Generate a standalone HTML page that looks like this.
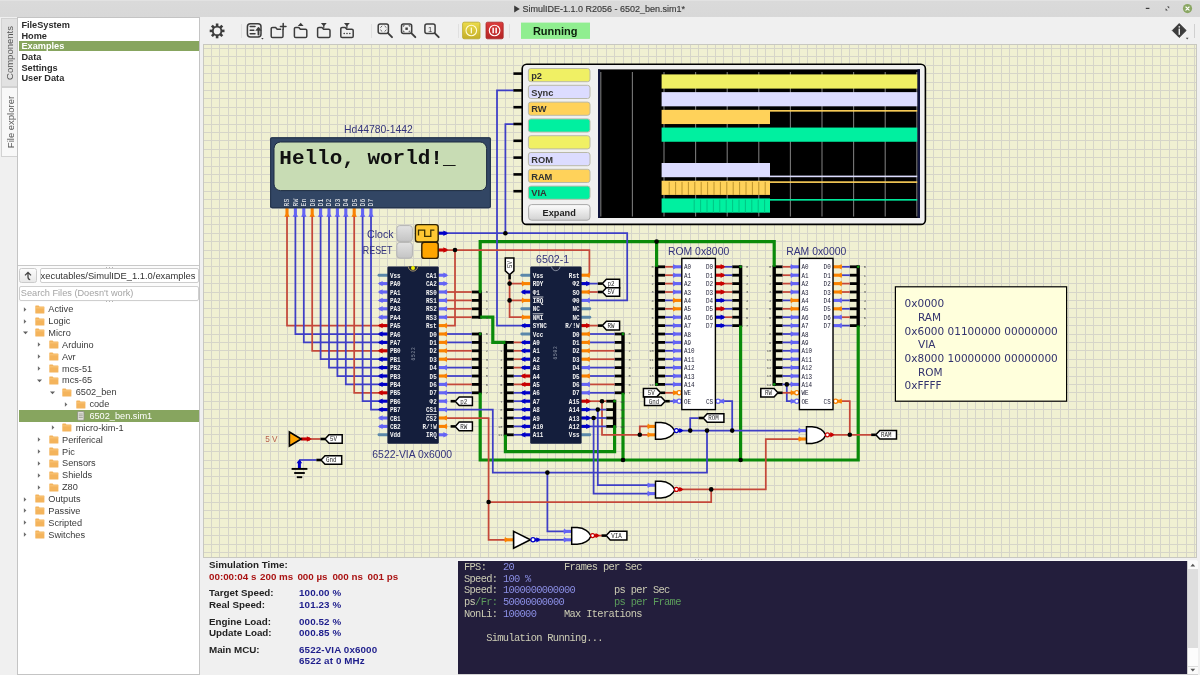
<!DOCTYPE html>
<html lang="en"><head><meta charset="utf-8"><title>SimulIDE-1.1.0 R2056 - 6502_ben.sim1*</title>
<style>
html,body{margin:0;padding:0}
html{background:#f0f0f0}
body{width:1200px;height:675px;overflow:hidden;background:#f0f0f0;position:relative;will-change:transform;font-family:"Liberation Sans",sans-serif;font-size:9.4px;color:#333}
.ab{position:absolute;display:block}
#title{position:absolute;left:0;top:0;width:1200px;height:17px;background:linear-gradient(#e6e6e6 0,#dadada 1.5px,#d8d8d8 100%)}
#title .t{position:absolute;left:522.5px;top:3.2px;height:12px;line-height:12px;font-size:9px;color:#3a3a3a;white-space:pre;-webkit-text-stroke:0.15px #3a3a3a}
#tabs{position:absolute;left:0;top:17px;width:18px;height:658px;background:#f0f0f0}
.vtab{position:absolute;left:1px;width:16.5px;box-sizing:border-box;border:1px solid #d2d2d2}
.vtab span{position:absolute;left:calc(50% + 1px);top:50%;white-space:nowrap;transform:translate(-50%,-50%) rotate(-90deg);font-size:9.5px;line-height:12px;color:#555}
#lpf{position:absolute;left:17px;top:17px;width:183px;height:658px;background:#fbfbfb;box-sizing:border-box;border:1px solid #c4c4c4}
#lp1{position:absolute;left:18px;top:18px;width:181px;height:248px;background:#fff;box-sizing:border-box;border:0 solid #cdcdcd;border-bottom:1px solid #c8c8c8;overflow:hidden}
.lr{position:absolute;left:3.4px;height:12px;line-height:12px;font-weight:bold;font-size:9.2px;white-space:pre}
.sel2{position:absolute;left:1.4px;width:179.6px;height:10.2px;background:#87a55f}
#up{position:absolute;left:19px;top:268px;width:17.5px;height:14.5px;box-sizing:border-box;border:1px solid #cbcbcb;border-radius:2.5px;background:linear-gradient(#fcfcfc,#e8e8e8)}
#path{position:absolute;left:40px;top:268px;width:159px;height:14.5px;box-sizing:border-box;border:1px solid #cdcdcd;border-radius:2px;background:#fff;overflow:hidden}
#path span{position:absolute;left:-0.4px;top:0.6px;line-height:12px;font-size:9.35px;color:#333;white-space:pre}
#search{position:absolute;left:19px;top:285.5px;width:180px;height:15px;box-sizing:border-box;border:1px solid #cfcfcf;border-radius:2px;background:#fff;overflow:hidden}
#search span{position:absolute;left:0.8px;top:0.9px;line-height:12px;font-size:9.2px;color:#a4a4a4;white-space:pre}
#tree{position:absolute;left:18px;top:301.5px;width:181px;height:372.5px;background:#fff}
#treein{position:absolute;left:0;top:0;width:200px;height:675px;pointer-events:none}
.tr{position:absolute;height:12px;line-height:12px;font-size:9.2px;white-space:pre}
.sel{position:absolute;left:19px;width:180px;height:11.4px;background:#87a55f}
#tb{position:absolute;left:200px;top:17px;width:1000px;height:27px;background:#f0f0f0}
.sep{position:absolute;top:6.5px;width:1px;height:14.5px;background:#e0e0e0}
#cv{position:absolute;left:203px;top:44px;width:994px;height:513.5px;overflow:hidden;background:#f0f0d2;box-sizing:border-box;border:1px solid #c8c8c0}
#cv svg{position:absolute;left:-204px;top:-45px}
#info{position:absolute;left:203px;top:558px;width:255px;height:117px;background:#f0f0f0}
.ir{position:absolute;height:12px;line-height:12px;font-weight:bold;font-size:9.8px;color:#222;white-space:pre}
.ir.rd{color:#aa1414}
.ir.bl{color:#1e1e8c;font-size:9.8px;letter-spacing:0.12px}
#con{position:absolute;left:458.3px;top:560.6px;width:728.7px;height:113px;background:#231e3c;overflow:hidden}
.cr{position:absolute;left:5.7px;height:12px;line-height:12px;font-family:"Liberation Mono",monospace;font-size:10.4px;letter-spacing:-0.68px;white-space:pre}
.cl{color:#ccccb4}.cv{color:#8a8ee4}.cg{color:#5c9c5c}
#sb{position:absolute;left:1187px;top:560.6px;width:10.5px;height:113px;background:#dedede;box-sizing:border-box;border-left:1px solid #cfcfcf}
.hd{position:absolute;width:1px;height:1px;background:#b4b4b4}
</style></head>
<body>
<div id="title">
<svg class="ab" style="left:513px;top:4px" width="8" height="10"><path d="M1.2,1.4 L6.8,5 L1.2,8.6 Z" fill="#3a3a3a"/></svg>
<div class="t">SimulIDE-1.1.0 R2056 - 6502_ben.sim1*</div>
<svg class="ab" style="left:1140px;top:0" width="60" height="17">
<rect x="5.8" y="7.8" width="3.6" height="1.2" fill="#3c3c3c"/>
<path d="M25.6,10.4 L25.6,8.2 L27.8,10.4 Z M29.2,6.4 L29.2,8.6 L27,6.4 Z" fill="#3c3c3c"/>
<circle cx="47.5" cy="8.6" r="4.6" fill="#8aa763"/>
<path d="M45.9,7 L49.1,10.2 M49.1,7 L45.9,10.2" stroke="#fff" stroke-width="1.1" stroke-linecap="round"/>
</svg>
</div>
<div id="tabs">
<div class="vtab" style="top:1.3px;height:69px;background:#e2e2e2"><span>Components</span></div>
<div class="vtab" style="top:70.3px;height:70px;background:#f8f8f8;border-right-color:#f8f8f8;width:17.5px"><span>File explorer</span></div>
</div>
<div id="lpf"></div>
<div id="lp1">
<div class="lr" style="top:1.00px;color:#2c2c2c">FileSystem</div>
<div class="lr" style="top:11.66px;color:#2c2c2c">Home</div>
<div class="sel2" style="top:23.22px"></div>
<div class="lr" style="top:22.32px;color:#fff">Examples</div>
<div class="lr" style="top:32.98px;color:#2c2c2c">Data</div>
<div class="lr" style="top:43.64px;color:#2c2c2c">Settings</div>
<div class="lr" style="top:54.30px;color:#2c2c2c">User Data</div>
</div>
<div id="up"><svg class="ab" style="left:3.2px;top:1.6px" width="10" height="10"><path d="M2,4.4 L5,1.4 L8,4.4 M5,1.6 L5,6 Q5,8.4 7.2,8.6" fill="none" stroke="#444" stroke-width="1.3"/></svg></div>
<div id="path"><span>xecutables/SimulIDE_1.1.0/examples</span></div>
<div id="search"><span>Search Files (Doesn't work)</span></div>
<div id="tree"></div>
<div id="treein">
<svg class="ab" style="left:22.30px;top:305.80px" width="6" height="7"><path d="M1.9,1.2 L4.4,3.5 L1.9,5.8 Z" fill="#707070"/></svg>
<svg class="ab" style="left:34.90px;top:304.70px" width="10" height="9"><path d="M0.3,0.9 Q0.3,0.4 0.9,0.4 L3.6,0.4 L4.5,1.5 L8.9,1.5 Q9.4,1.5 9.4,2 L9.4,7.9 Q9.4,8.4 8.9,8.4 L0.9,8.4 Q0.3,8.4 0.3,7.9 Z" fill="#f4b45c"/><path d="M0.3,2.6 L9.4,2.6 L9.4,3.2 L0.3,3.2 Z" fill="#fcd28c"/></svg>
<div class="tr" style="left:48.30px;top:303.30px;color:#3a3a3a">Active</div>
<svg class="ab" style="left:22.30px;top:317.66px" width="6" height="7"><path d="M1.9,1.2 L4.4,3.5 L1.9,5.8 Z" fill="#707070"/></svg>
<svg class="ab" style="left:34.90px;top:316.56px" width="10" height="9"><path d="M0.3,0.9 Q0.3,0.4 0.9,0.4 L3.6,0.4 L4.5,1.5 L8.9,1.5 Q9.4,1.5 9.4,2 L9.4,7.9 Q9.4,8.4 8.9,8.4 L0.9,8.4 Q0.3,8.4 0.3,7.9 Z" fill="#f4b45c"/><path d="M0.3,2.6 L9.4,2.6 L9.4,3.2 L0.3,3.2 Z" fill="#fcd28c"/></svg>
<div class="tr" style="left:48.30px;top:315.16px;color:#3a3a3a">Logic</div>
<svg class="ab" style="left:21.80px;top:330.42px" width="7" height="6"><path d="M1,1.4 L6,1.4 L3.5,4.2 Z" fill="#606060"/></svg>
<svg class="ab" style="left:34.90px;top:328.42px" width="10" height="9"><path d="M0.3,0.9 Q0.3,0.4 0.9,0.4 L3.6,0.4 L4.5,1.5 L8.9,1.5 Q9.4,1.5 9.4,2 L9.4,7.9 Q9.4,8.4 8.9,8.4 L0.9,8.4 Q0.3,8.4 0.3,7.9 Z" fill="#f4b45c"/><path d="M0.3,2.6 L9.4,2.6 L9.4,3.2 L0.3,3.2 Z" fill="#fcd28c"/></svg>
<div class="tr" style="left:48.30px;top:327.02px;color:#3a3a3a">Micro</div>
<svg class="ab" style="left:36.00px;top:341.38px" width="6" height="7"><path d="M1.9,1.2 L4.4,3.5 L1.9,5.8 Z" fill="#707070"/></svg>
<svg class="ab" style="left:48.60px;top:340.28px" width="10" height="9"><path d="M0.3,0.9 Q0.3,0.4 0.9,0.4 L3.6,0.4 L4.5,1.5 L8.9,1.5 Q9.4,1.5 9.4,2 L9.4,7.9 Q9.4,8.4 8.9,8.4 L0.9,8.4 Q0.3,8.4 0.3,7.9 Z" fill="#f4b45c"/><path d="M0.3,2.6 L9.4,2.6 L9.4,3.2 L0.3,3.2 Z" fill="#fcd28c"/></svg>
<div class="tr" style="left:62.00px;top:338.88px;color:#3a3a3a">Arduino</div>
<svg class="ab" style="left:36.00px;top:353.24px" width="6" height="7"><path d="M1.9,1.2 L4.4,3.5 L1.9,5.8 Z" fill="#707070"/></svg>
<svg class="ab" style="left:48.60px;top:352.14px" width="10" height="9"><path d="M0.3,0.9 Q0.3,0.4 0.9,0.4 L3.6,0.4 L4.5,1.5 L8.9,1.5 Q9.4,1.5 9.4,2 L9.4,7.9 Q9.4,8.4 8.9,8.4 L0.9,8.4 Q0.3,8.4 0.3,7.9 Z" fill="#f4b45c"/><path d="M0.3,2.6 L9.4,2.6 L9.4,3.2 L0.3,3.2 Z" fill="#fcd28c"/></svg>
<div class="tr" style="left:62.00px;top:350.74px;color:#3a3a3a">Avr</div>
<svg class="ab" style="left:36.00px;top:365.10px" width="6" height="7"><path d="M1.9,1.2 L4.4,3.5 L1.9,5.8 Z" fill="#707070"/></svg>
<svg class="ab" style="left:48.60px;top:364.00px" width="10" height="9"><path d="M0.3,0.9 Q0.3,0.4 0.9,0.4 L3.6,0.4 L4.5,1.5 L8.9,1.5 Q9.4,1.5 9.4,2 L9.4,7.9 Q9.4,8.4 8.9,8.4 L0.9,8.4 Q0.3,8.4 0.3,7.9 Z" fill="#f4b45c"/><path d="M0.3,2.6 L9.4,2.6 L9.4,3.2 L0.3,3.2 Z" fill="#fcd28c"/></svg>
<div class="tr" style="left:62.00px;top:362.60px;color:#3a3a3a">mcs-51</div>
<svg class="ab" style="left:35.50px;top:377.86px" width="7" height="6"><path d="M1,1.4 L6,1.4 L3.5,4.2 Z" fill="#606060"/></svg>
<svg class="ab" style="left:48.60px;top:375.86px" width="10" height="9"><path d="M0.3,0.9 Q0.3,0.4 0.9,0.4 L3.6,0.4 L4.5,1.5 L8.9,1.5 Q9.4,1.5 9.4,2 L9.4,7.9 Q9.4,8.4 8.9,8.4 L0.9,8.4 Q0.3,8.4 0.3,7.9 Z" fill="#f4b45c"/><path d="M0.3,2.6 L9.4,2.6 L9.4,3.2 L0.3,3.2 Z" fill="#fcd28c"/></svg>
<div class="tr" style="left:62.00px;top:374.46px;color:#3a3a3a">mcs-65</div>
<svg class="ab" style="left:49.20px;top:389.72px" width="7" height="6"><path d="M1,1.4 L6,1.4 L3.5,4.2 Z" fill="#606060"/></svg>
<svg class="ab" style="left:62.30px;top:387.72px" width="10" height="9"><path d="M0.3,0.9 Q0.3,0.4 0.9,0.4 L3.6,0.4 L4.5,1.5 L8.9,1.5 Q9.4,1.5 9.4,2 L9.4,7.9 Q9.4,8.4 8.9,8.4 L0.9,8.4 Q0.3,8.4 0.3,7.9 Z" fill="#f4b45c"/><path d="M0.3,2.6 L9.4,2.6 L9.4,3.2 L0.3,3.2 Z" fill="#fcd28c"/></svg>
<div class="tr" style="left:75.70px;top:386.32px;color:#3a3a3a">6502_ben</div>
<svg class="ab" style="left:63.40px;top:400.68px" width="6" height="7"><path d="M1.9,1.2 L4.4,3.5 L1.9,5.8 Z" fill="#707070"/></svg>
<svg class="ab" style="left:76.00px;top:399.58px" width="10" height="9"><path d="M0.3,0.9 Q0.3,0.4 0.9,0.4 L3.6,0.4 L4.5,1.5 L8.9,1.5 Q9.4,1.5 9.4,2 L9.4,7.9 Q9.4,8.4 8.9,8.4 L0.9,8.4 Q0.3,8.4 0.3,7.9 Z" fill="#f4b45c"/><path d="M0.3,2.6 L9.4,2.6 L9.4,3.2 L0.3,3.2 Z" fill="#fcd28c"/></svg>
<div class="tr" style="left:89.40px;top:398.18px;color:#3a3a3a">code</div>
<div class="sel" style="top:410.34px"></div>
<svg class="ab" style="left:77.40px;top:411.24px" width="8" height="10"><rect x="0.6" y="0.6" width="6.4" height="8.6" rx="0.8" fill="#e6e6e0" stroke="#8c9082" stroke-width="0.9"/><path d="M1.8,3 H5.8 M1.8,4.8 H5.8 M1.8,6.6 H5.8" stroke="#8c9082" stroke-width="0.8"/></svg>
<div class="tr" style="left:89.40px;top:410.04px;color:#fff">6502_ben.sim1</div>
<svg class="ab" style="left:49.70px;top:424.40px" width="6" height="7"><path d="M1.9,1.2 L4.4,3.5 L1.9,5.8 Z" fill="#707070"/></svg>
<svg class="ab" style="left:62.30px;top:423.30px" width="10" height="9"><path d="M0.3,0.9 Q0.3,0.4 0.9,0.4 L3.6,0.4 L4.5,1.5 L8.9,1.5 Q9.4,1.5 9.4,2 L9.4,7.9 Q9.4,8.4 8.9,8.4 L0.9,8.4 Q0.3,8.4 0.3,7.9 Z" fill="#f4b45c"/><path d="M0.3,2.6 L9.4,2.6 L9.4,3.2 L0.3,3.2 Z" fill="#fcd28c"/></svg>
<div class="tr" style="left:75.70px;top:421.90px;color:#3a3a3a">micro-kim-1</div>
<svg class="ab" style="left:36.00px;top:436.26px" width="6" height="7"><path d="M1.9,1.2 L4.4,3.5 L1.9,5.8 Z" fill="#707070"/></svg>
<svg class="ab" style="left:48.60px;top:435.16px" width="10" height="9"><path d="M0.3,0.9 Q0.3,0.4 0.9,0.4 L3.6,0.4 L4.5,1.5 L8.9,1.5 Q9.4,1.5 9.4,2 L9.4,7.9 Q9.4,8.4 8.9,8.4 L0.9,8.4 Q0.3,8.4 0.3,7.9 Z" fill="#f4b45c"/><path d="M0.3,2.6 L9.4,2.6 L9.4,3.2 L0.3,3.2 Z" fill="#fcd28c"/></svg>
<div class="tr" style="left:62.00px;top:433.76px;color:#3a3a3a">Periferical</div>
<svg class="ab" style="left:36.00px;top:448.12px" width="6" height="7"><path d="M1.9,1.2 L4.4,3.5 L1.9,5.8 Z" fill="#707070"/></svg>
<svg class="ab" style="left:48.60px;top:447.02px" width="10" height="9"><path d="M0.3,0.9 Q0.3,0.4 0.9,0.4 L3.6,0.4 L4.5,1.5 L8.9,1.5 Q9.4,1.5 9.4,2 L9.4,7.9 Q9.4,8.4 8.9,8.4 L0.9,8.4 Q0.3,8.4 0.3,7.9 Z" fill="#f4b45c"/><path d="M0.3,2.6 L9.4,2.6 L9.4,3.2 L0.3,3.2 Z" fill="#fcd28c"/></svg>
<div class="tr" style="left:62.00px;top:445.62px;color:#3a3a3a">Pic</div>
<svg class="ab" style="left:36.00px;top:459.98px" width="6" height="7"><path d="M1.9,1.2 L4.4,3.5 L1.9,5.8 Z" fill="#707070"/></svg>
<svg class="ab" style="left:48.60px;top:458.88px" width="10" height="9"><path d="M0.3,0.9 Q0.3,0.4 0.9,0.4 L3.6,0.4 L4.5,1.5 L8.9,1.5 Q9.4,1.5 9.4,2 L9.4,7.9 Q9.4,8.4 8.9,8.4 L0.9,8.4 Q0.3,8.4 0.3,7.9 Z" fill="#f4b45c"/><path d="M0.3,2.6 L9.4,2.6 L9.4,3.2 L0.3,3.2 Z" fill="#fcd28c"/></svg>
<div class="tr" style="left:62.00px;top:457.48px;color:#3a3a3a">Sensors</div>
<svg class="ab" style="left:36.00px;top:471.84px" width="6" height="7"><path d="M1.9,1.2 L4.4,3.5 L1.9,5.8 Z" fill="#707070"/></svg>
<svg class="ab" style="left:48.60px;top:470.74px" width="10" height="9"><path d="M0.3,0.9 Q0.3,0.4 0.9,0.4 L3.6,0.4 L4.5,1.5 L8.9,1.5 Q9.4,1.5 9.4,2 L9.4,7.9 Q9.4,8.4 8.9,8.4 L0.9,8.4 Q0.3,8.4 0.3,7.9 Z" fill="#f4b45c"/><path d="M0.3,2.6 L9.4,2.6 L9.4,3.2 L0.3,3.2 Z" fill="#fcd28c"/></svg>
<div class="tr" style="left:62.00px;top:469.34px;color:#3a3a3a">Shields</div>
<svg class="ab" style="left:36.00px;top:483.70px" width="6" height="7"><path d="M1.9,1.2 L4.4,3.5 L1.9,5.8 Z" fill="#707070"/></svg>
<svg class="ab" style="left:48.60px;top:482.60px" width="10" height="9"><path d="M0.3,0.9 Q0.3,0.4 0.9,0.4 L3.6,0.4 L4.5,1.5 L8.9,1.5 Q9.4,1.5 9.4,2 L9.4,7.9 Q9.4,8.4 8.9,8.4 L0.9,8.4 Q0.3,8.4 0.3,7.9 Z" fill="#f4b45c"/><path d="M0.3,2.6 L9.4,2.6 L9.4,3.2 L0.3,3.2 Z" fill="#fcd28c"/></svg>
<div class="tr" style="left:62.00px;top:481.20px;color:#3a3a3a">Z80</div>
<svg class="ab" style="left:22.30px;top:495.56px" width="6" height="7"><path d="M1.9,1.2 L4.4,3.5 L1.9,5.8 Z" fill="#707070"/></svg>
<svg class="ab" style="left:34.90px;top:494.46px" width="10" height="9"><path d="M0.3,0.9 Q0.3,0.4 0.9,0.4 L3.6,0.4 L4.5,1.5 L8.9,1.5 Q9.4,1.5 9.4,2 L9.4,7.9 Q9.4,8.4 8.9,8.4 L0.9,8.4 Q0.3,8.4 0.3,7.9 Z" fill="#f4b45c"/><path d="M0.3,2.6 L9.4,2.6 L9.4,3.2 L0.3,3.2 Z" fill="#fcd28c"/></svg>
<div class="tr" style="left:48.30px;top:493.06px;color:#3a3a3a">Outputs</div>
<svg class="ab" style="left:22.30px;top:507.42px" width="6" height="7"><path d="M1.9,1.2 L4.4,3.5 L1.9,5.8 Z" fill="#707070"/></svg>
<svg class="ab" style="left:34.90px;top:506.32px" width="10" height="9"><path d="M0.3,0.9 Q0.3,0.4 0.9,0.4 L3.6,0.4 L4.5,1.5 L8.9,1.5 Q9.4,1.5 9.4,2 L9.4,7.9 Q9.4,8.4 8.9,8.4 L0.9,8.4 Q0.3,8.4 0.3,7.9 Z" fill="#f4b45c"/><path d="M0.3,2.6 L9.4,2.6 L9.4,3.2 L0.3,3.2 Z" fill="#fcd28c"/></svg>
<div class="tr" style="left:48.30px;top:504.92px;color:#3a3a3a">Passive</div>
<svg class="ab" style="left:22.30px;top:519.28px" width="6" height="7"><path d="M1.9,1.2 L4.4,3.5 L1.9,5.8 Z" fill="#707070"/></svg>
<svg class="ab" style="left:34.90px;top:518.18px" width="10" height="9"><path d="M0.3,0.9 Q0.3,0.4 0.9,0.4 L3.6,0.4 L4.5,1.5 L8.9,1.5 Q9.4,1.5 9.4,2 L9.4,7.9 Q9.4,8.4 8.9,8.4 L0.9,8.4 Q0.3,8.4 0.3,7.9 Z" fill="#f4b45c"/><path d="M0.3,2.6 L9.4,2.6 L9.4,3.2 L0.3,3.2 Z" fill="#fcd28c"/></svg>
<div class="tr" style="left:48.30px;top:516.78px;color:#3a3a3a">Scripted</div>
<svg class="ab" style="left:22.30px;top:531.14px" width="6" height="7"><path d="M1.9,1.2 L4.4,3.5 L1.9,5.8 Z" fill="#707070"/></svg>
<svg class="ab" style="left:34.90px;top:530.04px" width="10" height="9"><path d="M0.3,0.9 Q0.3,0.4 0.9,0.4 L3.6,0.4 L4.5,1.5 L8.9,1.5 Q9.4,1.5 9.4,2 L9.4,7.9 Q9.4,8.4 8.9,8.4 L0.9,8.4 Q0.3,8.4 0.3,7.9 Z" fill="#f4b45c"/><path d="M0.3,2.6 L9.4,2.6 L9.4,3.2 L0.3,3.2 Z" fill="#fcd28c"/></svg>
<div class="tr" style="left:48.30px;top:528.64px;color:#3a3a3a">Switches</div>
</div>
<div class="hd" style="left:106px;top:266.5px"></div><div class="hd" style="left:109px;top:266.5px"></div><div class="hd" style="left:112px;top:266.5px"></div>
<div class="hd" style="left:106px;top:301px"></div><div class="hd" style="left:109px;top:301px"></div><div class="hd" style="left:112px;top:301px"></div>
<div class="hd" style="left:695px;top:558.5px"></div><div class="hd" style="left:698px;top:558.5px"></div><div class="hd" style="left:701px;top:558.5px"></div>
<div class="hd" style="left:456px;top:611px"></div><div class="hd" style="left:456px;top:614px"></div><div class="hd" style="left:456px;top:617px"></div>
<div id="tb">
<svg class="ab" style="left:0;top:0" width="1000" height="27" viewBox="200 17 1000 27">
<g transform="translate(217.1,30.9)"><rect x="-1.3" y="-7.4" width="2.6" height="3" fill="#3c3c3c" transform="rotate(0)"/><rect x="-1.3" y="-7.4" width="2.6" height="3" fill="#3c3c3c" transform="rotate(45)"/><rect x="-1.3" y="-7.4" width="2.6" height="3" fill="#3c3c3c" transform="rotate(90)"/><rect x="-1.3" y="-7.4" width="2.6" height="3" fill="#3c3c3c" transform="rotate(135)"/><rect x="-1.3" y="-7.4" width="2.6" height="3" fill="#3c3c3c" transform="rotate(180)"/><rect x="-1.3" y="-7.4" width="2.6" height="3" fill="#3c3c3c" transform="rotate(225)"/><rect x="-1.3" y="-7.4" width="2.6" height="3" fill="#3c3c3c" transform="rotate(270)"/><rect x="-1.3" y="-7.4" width="2.6" height="3" fill="#3c3c3c" transform="rotate(315)"/><circle r="4.3" fill="none" stroke="#3c3c3c" stroke-width="1.9"/></g>
<g fill="none" stroke="#3c3c3c" stroke-width="1.5" stroke-linejoin="round" stroke-linecap="round">
<rect x="247.4" y="23.7" width="13.6" height="13.2" rx="3"/>
<path d="M250.2,26.6 H255 M250.2,30.2 H253.8 M250.2,33.8 H255"/>
<path d="M258.5,34.6 V28.6" stroke-width="1.9"/><path d="M256,30.2 L258.5,27 L261,30.2 Z" fill="#3c3c3c" stroke-width="0.6"/>
<path d="M283,29.4 V36.2 Q283,37.6 281.6,37.6 H272.6 Q271.2,37.6 271.2,36.2 V28.6 Q271.2,27.4 272.6,27.4 H275.6 L277.2,29.2 H280.6"/>
<path d="M283.2,23.6 V29.2 M280.4,26.4 H286"/>
<path d="M294.4,28.6 Q294.4,27.4 295.8,27.4 H298.8 L300.4,29.2 H305.4 Q306.8,29.2 306.8,30.6 V36.2 Q306.8,37.6 305.4,37.6 H295.8 Q294.4,37.6 294.4,36.2 Z"/>
<path d="M317.6,28.6 Q317.6,27.4 319,27.4 H322 L323.6,29.2 H328.6 Q330,29.2 330,30.6 V36.2 Q330,37.6 328.6,37.6 H319 Q317.6,37.6 317.6,36.2 Z"/>
<path d="M340.8,28.6 Q340.8,27.4 342.2,27.4 H345.2 L346.8,29.2 H351.8 Q353.2,29.2 353.2,30.6 V36.2 Q353.2,37.6 351.8,37.6 H342.2 Q340.8,37.6 340.8,36.2 Z"/>
<path d="M323.8,25.6 V27.8 M346.9,25.6 V27.8" stroke-width="1.2"/>
<rect x="378.2" y="23.9" width="10.2" height="9.6" rx="2"/>
<path d="M388,33.2 L392,37.2" stroke-width="1.9"/>
<rect x="401.5" y="23.9" width="10.2" height="9.6" rx="2"/>
<path d="M411.3,33.2 L415.3,37.2" stroke-width="1.9"/>
<rect x="424.9" y="23.9" width="10.2" height="9.6" rx="2"/>
<path d="M434.7,33.2 L438.7,37.2" stroke-width="1.9"/>
</g>
<g fill="#3c3c3c">
<path d="M297.8,26 L300.7,22.8 L303.6,26 Z"/>
<path d="M320.9,23 L326.7,23 L323.8,26.4 Z"/>
<path d="M344,23 L349.8,23 L346.9,26.4 Z"/>
<circle cx="344.2" cy="33.5" r="0.8"/><circle cx="347" cy="33.5" r="0.8"/><circle cx="349.8" cy="33.5" r="0.8"/>
<path d="M261.2,38 L263.6,38 L262.4,39.4 Z"/>
<rect x="405.4" y="27.5" width="2.4" height="2.4"/>
</g>
<g fill="none" stroke="#3c3c3c" stroke-width="0.8">
<path d="M380.4,27.6 L382.2,25.9 M384.6,25.9 L386.4,27.6 M380.4,29.8 L382.2,31.5 M384.6,31.5 L386.4,29.8"/>
<path d="M403.4,26.8 V25.6 H404.6 M408.6,25.6 H409.8 V26.8 M403.4,30.6 V31.8 H404.6 M408.6,31.8 H409.8 V30.6"/>
</g>
<text x="430" y="31.6" font-family="'Liberation Sans', sans-serif" font-size="7.6" fill="#3c3c3c" text-anchor="middle">1</text>
<!-- run buttons -->
<rect x="462.6" y="22.2" width="17.4" height="16.6" rx="1.5" fill="url(#yg)" stroke="#b8a828" stroke-width="0.8"/>
<circle cx="471.3" cy="30.5" r="5.3" fill="none" stroke="#fffbd8" stroke-width="1.1"/>
<rect x="470.7" y="27.6" width="1.3" height="5.8" fill="#fffbd8"/>
<rect x="486" y="22.2" width="17.2" height="16.6" rx="1.5" fill="url(#rg)" stroke="#a82828" stroke-width="0.8"/>
<circle cx="494.6" cy="30.5" r="5.3" fill="none" stroke="#fff" stroke-width="1.1"/>
<rect x="492.4" y="27.7" width="1.5" height="5.6" fill="#fff"/><rect x="495.4" y="27.7" width="1.5" height="5.6" fill="#fff"/>
<rect x="521" y="22.6" width="69" height="16.3" fill="#90ee90"/>
<text x="555.2" y="35.4" font-family="'Liberation Sans', sans-serif" font-size="11" font-weight="bold" fill="#0c1e0c" text-anchor="middle">Running</text>
<!-- info -->
<path d="M1179.2,23.6 L1186.1,30.5 L1179.2,37.4 L1172.3,30.5 Z" fill="#3c3c3c" stroke="#3c3c3c" stroke-width="1" stroke-linejoin="round"/>
<rect x="1178.6" y="28.6" width="1.3" height="6.2" fill="#fff"/><rect x="1178.6" y="26.2" width="1.3" height="1.4" fill="#fff"/>
<path d="M1185.8,37.8 L1188.6,37.8 L1187.2,39.4 Z" fill="#4a4a4a"/>
<defs>
<linearGradient id="yg" x1="0" y1="0" x2="0" y2="1"><stop offset="0" stop-color="#ecdc4a"/><stop offset="1" stop-color="#c4ae28"/></linearGradient>
<linearGradient id="rg" x1="0" y1="0" x2="0" y2="1"><stop offset="0" stop-color="#dc3c3c"/><stop offset="1" stop-color="#b42626"/></linearGradient>
</defs>
</svg>
<div class="sep" style="left:40.6px"></div><div class="sep" style="left:170.8px"></div><div class="sep" style="left:258px"></div><div class="sep" style="left:308.6px"></div><div class="sep" style="left:993.6px;background:#d0d0d0"></div>
</div>
<div id="cv">
<svg width="1200" height="675" viewBox="0 0 1200 675">
<defs>
<pattern id="grid" x="207.20000000000002" y="44.199999999999996" width="8.4" height="8.4" patternUnits="userSpaceOnUse">
<path d="M4.2,0 V8.4 M0,4.2 H8.4" fill="none" stroke="#d2d0c6" stroke-width="1"/>
</pattern>
<linearGradient id="btng" x1="0" y1="0" x2="0" y2="1"><stop offset="0" stop-color="#e2e2e2"/><stop offset="1" stop-color="#c4c4c4"/></linearGradient>
<linearGradient id="btng2" x1="0" y1="0" x2="0" y2="1"><stop offset="0" stop-color="#fdfdfd"/><stop offset="1" stop-color="#d2d2d2"/></linearGradient>
</defs>
<path d="M202.5,44V558M211.5,44V558M219.5,44V558M228.5,44V558M236.5,44V558M245.5,44V558M253.5,44V558M261.5,44V558M270.5,44V558M278.5,44V558M287.5,44V558M295.5,44V558M303.5,44V558M312.5,44V558M320.5,44V558M329.5,44V558M337.5,44V558M345.5,44V558M354.5,44V558M362.5,44V558M371.5,44V558M379.5,44V558M387.5,44V558M396.5,44V558M404.5,44V558M413.5,44V558M421.5,44V558M429.5,44V558M438.5,44V558M446.5,44V558M455.5,44V558M463.5,44V558M471.5,44V558M480.5,44V558M488.5,44V558M497.5,44V558M505.5,44V558M513.5,44V558M522.5,44V558M530.5,44V558M539.5,44V558M547.5,44V558M555.5,44V558M564.5,44V558M572.5,44V558M581.5,44V558M589.5,44V558M597.5,44V558M606.5,44V558M614.5,44V558M623.5,44V558M631.5,44V558M639.5,44V558M648.5,44V558M656.5,44V558M665.5,44V558M673.5,44V558M681.5,44V558M690.5,44V558M698.5,44V558M707.5,44V558M715.5,44V558M723.5,44V558M732.5,44V558M740.5,44V558M749.5,44V558M757.5,44V558M765.5,44V558M774.5,44V558M782.5,44V558M791.5,44V558M799.5,44V558M807.5,44V558M816.5,44V558M824.5,44V558M833.5,44V558M841.5,44V558M849.5,44V558M858.5,44V558M866.5,44V558M875.5,44V558M883.5,44V558M891.5,44V558M900.5,44V558M908.5,44V558M917.5,44V558M925.5,44V558M933.5,44V558M942.5,44V558M950.5,44V558M959.5,44V558M967.5,44V558M975.5,44V558M984.5,44V558M992.5,44V558M1001.5,44V558M1009.5,44V558M1017.5,44V558M1026.5,44V558M1034.5,44V558M1043.5,44V558M1051.5,44V558M1060.5,44V558M1068.5,44V558M1076.5,44V558M1085.5,44V558M1093.5,44V558M1102.5,44V558M1110.5,44V558M1118.5,44V558M1127.5,44V558M1135.5,44V558M1144.5,44V558M1152.5,44V558M1160.5,44V558M1169.5,44V558M1177.5,44V558M1186.5,44V558M1194.5,44V558M203,39.5H1198M203,48.5H1198M203,56.5H1198M203,65.5H1198M203,73.5H1198M203,82.5H1198M203,90.5H1198M203,98.5H1198M203,107.5H1198M203,115.5H1198M203,124.5H1198M203,132.5H1198M203,140.5H1198M203,149.5H1198M203,157.5H1198M203,166.5H1198M203,174.5H1198M203,182.5H1198M203,191.5H1198M203,199.5H1198M203,208.5H1198M203,216.5H1198M203,224.5H1198M203,233.5H1198M203,241.5H1198M203,250.5H1198M203,258.5H1198M203,266.5H1198M203,275.5H1198M203,283.5H1198M203,292.5H1198M203,300.5H1198M203,308.5H1198M203,317.5H1198M203,325.5H1198M203,334.5H1198M203,342.5H1198M203,350.5H1198M203,359.5H1198M203,367.5H1198M203,376.5H1198M203,384.5H1198M203,392.5H1198M203,401.5H1198M203,409.5H1198M203,418.5H1198M203,426.5H1198M203,434.5H1198M203,443.5H1198M203,451.5H1198M203,460.5H1198M203,468.5H1198M203,476.5H1198M203,485.5H1198M203,493.5H1198M203,502.5H1198M203,510.5H1198M203,518.5H1198M203,527.5H1198M203,535.5H1198M203,544.5H1198M203,552.5H1198" fill="none" stroke="#d6d5c9" stroke-width="1" shape-rendering="crispEdges"/>
<line x1="287.00" y1="208.00" x2="287.00" y2="216.40" stroke="#fa8200" stroke-width="3.1"/>
<polygon points="287.00,212.80 284.20,216.40 287.00,217.20 289.80,216.40" fill="#fa8200"/>
<line x1="295.40" y1="208.00" x2="295.40" y2="216.40" stroke="#6464f5" stroke-width="3.1"/>
<polygon points="295.40,212.80 292.60,216.40 295.40,217.20 298.20,216.40" fill="#6464f5"/>
<line x1="303.80" y1="208.00" x2="303.80" y2="216.40" stroke="#6464f5" stroke-width="3.1"/>
<polygon points="303.80,212.80 301.00,216.40 303.80,217.20 306.60,216.40" fill="#6464f5"/>
<line x1="312.20" y1="208.00" x2="312.20" y2="216.40" stroke="#fa8200" stroke-width="3.1"/>
<polygon points="312.20,212.80 309.40,216.40 312.20,217.20 315.00,216.40" fill="#fa8200"/>
<line x1="320.60" y1="208.00" x2="320.60" y2="216.40" stroke="#6464f5" stroke-width="3.1"/>
<polygon points="320.60,212.80 317.80,216.40 320.60,217.20 323.40,216.40" fill="#6464f5"/>
<line x1="329.00" y1="208.00" x2="329.00" y2="216.40" stroke="#6464f5" stroke-width="3.1"/>
<polygon points="329.00,212.80 326.20,216.40 329.00,217.20 331.80,216.40" fill="#6464f5"/>
<line x1="337.40" y1="208.00" x2="337.40" y2="216.40" stroke="#6464f5" stroke-width="3.1"/>
<polygon points="337.40,212.80 334.60,216.40 337.40,217.20 340.20,216.40" fill="#6464f5"/>
<line x1="345.80" y1="208.00" x2="345.80" y2="216.40" stroke="#6464f5" stroke-width="3.1"/>
<polygon points="345.80,212.80 343.00,216.40 345.80,217.20 348.60,216.40" fill="#6464f5"/>
<line x1="354.20" y1="208.00" x2="354.20" y2="216.40" stroke="#fa8200" stroke-width="3.1"/>
<polygon points="354.20,212.80 351.40,216.40 354.20,217.20 357.00,216.40" fill="#fa8200"/>
<line x1="362.60" y1="208.00" x2="362.60" y2="216.40" stroke="#6464f5" stroke-width="3.1"/>
<polygon points="362.60,212.80 359.80,216.40 362.60,217.20 365.40,216.40" fill="#6464f5"/>
<line x1="371.00" y1="208.00" x2="371.00" y2="216.40" stroke="#6464f5" stroke-width="3.1"/>
<polygon points="371.00,212.80 368.20,216.40 371.00,217.20 373.80,216.40" fill="#6464f5"/>
<polyline points="539.5,539.8 564,539.8" fill="none" stroke="#3e3ec6" stroke-width="1.75"/>
<polyline points="310,439.0 320.3,439.0" fill="none" stroke="#c4483a" stroke-width="1.75"/>
<polyline points="299.4,460.0 316.5,460.0" fill="none" stroke="#3e3ec6" stroke-width="1.75"/>
<line x1="471.8" y1="292.0" x2="480.2" y2="292.0" stroke="#000" stroke-width="2.8"/>
<line x1="471.8" y1="300.4" x2="480.2" y2="300.4" stroke="#000" stroke-width="2.8"/>
<line x1="471.8" y1="308.8" x2="480.2" y2="308.8" stroke="#000" stroke-width="2.8"/>
<line x1="471.8" y1="317.2" x2="480.2" y2="317.2" stroke="#000" stroke-width="2.8"/>
<line x1="480.2" y1="290.5" x2="480.2" y2="318.7" stroke="#000" stroke-width="3.4"/>
<line x1="471.8" y1="334.0" x2="480.2" y2="334.0" stroke="#000" stroke-width="2.8"/>
<line x1="471.8" y1="342.4" x2="480.2" y2="342.4" stroke="#000" stroke-width="2.8"/>
<line x1="471.8" y1="350.8" x2="480.2" y2="350.8" stroke="#000" stroke-width="2.8"/>
<line x1="471.8" y1="359.2" x2="480.2" y2="359.2" stroke="#000" stroke-width="2.8"/>
<line x1="471.8" y1="367.6" x2="480.2" y2="367.6" stroke="#000" stroke-width="2.8"/>
<line x1="471.8" y1="376.0" x2="480.2" y2="376.0" stroke="#000" stroke-width="2.8"/>
<line x1="471.8" y1="384.4" x2="480.2" y2="384.4" stroke="#000" stroke-width="2.8"/>
<line x1="471.8" y1="392.8" x2="480.2" y2="392.8" stroke="#000" stroke-width="2.8"/>
<line x1="480.2" y1="332.5" x2="480.2" y2="394.3" stroke="#000" stroke-width="3.4"/>
<line x1="505.4" y1="342.4" x2="513.8" y2="342.4" stroke="#000" stroke-width="2.8"/>
<line x1="505.4" y1="350.8" x2="513.8" y2="350.8" stroke="#000" stroke-width="2.8"/>
<line x1="505.4" y1="359.2" x2="513.8" y2="359.2" stroke="#000" stroke-width="2.8"/>
<line x1="505.4" y1="367.6" x2="513.8" y2="367.6" stroke="#000" stroke-width="2.8"/>
<line x1="505.4" y1="376.0" x2="513.8" y2="376.0" stroke="#000" stroke-width="2.8"/>
<line x1="505.4" y1="384.4" x2="513.8" y2="384.4" stroke="#000" stroke-width="2.8"/>
<line x1="505.4" y1="392.8" x2="513.8" y2="392.8" stroke="#000" stroke-width="2.8"/>
<line x1="505.4" y1="401.2" x2="513.8" y2="401.2" stroke="#000" stroke-width="2.8"/>
<line x1="505.4" y1="409.6" x2="513.8" y2="409.6" stroke="#000" stroke-width="2.8"/>
<line x1="505.4" y1="418.0" x2="513.8" y2="418.0" stroke="#000" stroke-width="2.8"/>
<line x1="505.4" y1="426.4" x2="513.8" y2="426.4" stroke="#000" stroke-width="2.8"/>
<line x1="505.4" y1="434.8" x2="513.8" y2="434.8" stroke="#000" stroke-width="2.8"/>
<line x1="505.4" y1="340.9" x2="505.4" y2="436.3" stroke="#000" stroke-width="3.4"/>
<line x1="606.2" y1="401.2" x2="614.6" y2="401.2" stroke="#000" stroke-width="2.8"/>
<line x1="606.2" y1="409.6" x2="614.6" y2="409.6" stroke="#000" stroke-width="2.8"/>
<line x1="606.2" y1="418.0" x2="614.6" y2="418.0" stroke="#000" stroke-width="2.8"/>
<line x1="606.2" y1="426.4" x2="614.6" y2="426.4" stroke="#000" stroke-width="2.8"/>
<line x1="614.6" y1="399.7" x2="614.6" y2="427.9" stroke="#000" stroke-width="3.4"/>
<line x1="614.6" y1="334.0" x2="623.0" y2="334.0" stroke="#000" stroke-width="2.8"/>
<line x1="614.6" y1="342.4" x2="623.0" y2="342.4" stroke="#000" stroke-width="2.8"/>
<line x1="614.6" y1="350.8" x2="623.0" y2="350.8" stroke="#000" stroke-width="2.8"/>
<line x1="614.6" y1="359.2" x2="623.0" y2="359.2" stroke="#000" stroke-width="2.8"/>
<line x1="614.6" y1="367.6" x2="623.0" y2="367.6" stroke="#000" stroke-width="2.8"/>
<line x1="614.6" y1="376.0" x2="623.0" y2="376.0" stroke="#000" stroke-width="2.8"/>
<line x1="614.6" y1="384.4" x2="623.0" y2="384.4" stroke="#000" stroke-width="2.8"/>
<line x1="614.6" y1="392.8" x2="623.0" y2="392.8" stroke="#000" stroke-width="2.8"/>
<line x1="623.0" y1="332.5" x2="623.0" y2="394.3" stroke="#000" stroke-width="3.4"/>
<line x1="656.6" y1="266.8" x2="665.0" y2="266.8" stroke="#000" stroke-width="2.8"/>
<line x1="656.6" y1="275.2" x2="665.0" y2="275.2" stroke="#000" stroke-width="2.8"/>
<line x1="656.6" y1="283.6" x2="665.0" y2="283.6" stroke="#000" stroke-width="2.8"/>
<line x1="656.6" y1="292.0" x2="665.0" y2="292.0" stroke="#000" stroke-width="2.8"/>
<line x1="656.6" y1="300.4" x2="665.0" y2="300.4" stroke="#000" stroke-width="2.8"/>
<line x1="656.6" y1="308.8" x2="665.0" y2="308.8" stroke="#000" stroke-width="2.8"/>
<line x1="656.6" y1="317.2" x2="665.0" y2="317.2" stroke="#000" stroke-width="2.8"/>
<line x1="656.6" y1="325.6" x2="665.0" y2="325.6" stroke="#000" stroke-width="2.8"/>
<line x1="656.6" y1="334.0" x2="665.0" y2="334.0" stroke="#000" stroke-width="2.8"/>
<line x1="656.6" y1="342.4" x2="665.0" y2="342.4" stroke="#000" stroke-width="2.8"/>
<line x1="656.6" y1="350.8" x2="665.0" y2="350.8" stroke="#000" stroke-width="2.8"/>
<line x1="656.6" y1="359.2" x2="665.0" y2="359.2" stroke="#000" stroke-width="2.8"/>
<line x1="656.6" y1="367.6" x2="665.0" y2="367.6" stroke="#000" stroke-width="2.8"/>
<line x1="656.6" y1="376.0" x2="665.0" y2="376.0" stroke="#000" stroke-width="2.8"/>
<line x1="656.6" y1="384.4" x2="665.0" y2="384.4" stroke="#000" stroke-width="2.8"/>
<line x1="656.6" y1="265.3" x2="656.6" y2="385.9" stroke="#000" stroke-width="3.4"/>
<line x1="732.2" y1="266.8" x2="740.6" y2="266.8" stroke="#000" stroke-width="2.8"/>
<line x1="732.2" y1="275.2" x2="740.6" y2="275.2" stroke="#000" stroke-width="2.8"/>
<line x1="732.2" y1="283.6" x2="740.6" y2="283.6" stroke="#000" stroke-width="2.8"/>
<line x1="732.2" y1="292.0" x2="740.6" y2="292.0" stroke="#000" stroke-width="2.8"/>
<line x1="732.2" y1="300.4" x2="740.6" y2="300.4" stroke="#000" stroke-width="2.8"/>
<line x1="732.2" y1="308.8" x2="740.6" y2="308.8" stroke="#000" stroke-width="2.8"/>
<line x1="732.2" y1="317.2" x2="740.6" y2="317.2" stroke="#000" stroke-width="2.8"/>
<line x1="732.2" y1="325.6" x2="740.6" y2="325.6" stroke="#000" stroke-width="2.8"/>
<line x1="740.6" y1="265.3" x2="740.6" y2="327.1" stroke="#000" stroke-width="3.4"/>
<line x1="774.2" y1="266.8" x2="782.6" y2="266.8" stroke="#000" stroke-width="2.8"/>
<line x1="774.2" y1="275.2" x2="782.6" y2="275.2" stroke="#000" stroke-width="2.8"/>
<line x1="774.2" y1="283.6" x2="782.6" y2="283.6" stroke="#000" stroke-width="2.8"/>
<line x1="774.2" y1="292.0" x2="782.6" y2="292.0" stroke="#000" stroke-width="2.8"/>
<line x1="774.2" y1="300.4" x2="782.6" y2="300.4" stroke="#000" stroke-width="2.8"/>
<line x1="774.2" y1="308.8" x2="782.6" y2="308.8" stroke="#000" stroke-width="2.8"/>
<line x1="774.2" y1="317.2" x2="782.6" y2="317.2" stroke="#000" stroke-width="2.8"/>
<line x1="774.2" y1="325.6" x2="782.6" y2="325.6" stroke="#000" stroke-width="2.8"/>
<line x1="774.2" y1="334.0" x2="782.6" y2="334.0" stroke="#000" stroke-width="2.8"/>
<line x1="774.2" y1="342.4" x2="782.6" y2="342.4" stroke="#000" stroke-width="2.8"/>
<line x1="774.2" y1="350.8" x2="782.6" y2="350.8" stroke="#000" stroke-width="2.8"/>
<line x1="774.2" y1="359.2" x2="782.6" y2="359.2" stroke="#000" stroke-width="2.8"/>
<line x1="774.2" y1="367.6" x2="782.6" y2="367.6" stroke="#000" stroke-width="2.8"/>
<line x1="774.2" y1="376.0" x2="782.6" y2="376.0" stroke="#000" stroke-width="2.8"/>
<line x1="774.2" y1="384.4" x2="782.6" y2="384.4" stroke="#000" stroke-width="2.8"/>
<line x1="774.2" y1="265.3" x2="774.2" y2="385.9" stroke="#000" stroke-width="3.4"/>
<line x1="849.8" y1="266.8" x2="858.2" y2="266.8" stroke="#000" stroke-width="2.8"/>
<line x1="849.8" y1="275.2" x2="858.2" y2="275.2" stroke="#000" stroke-width="2.8"/>
<line x1="849.8" y1="283.6" x2="858.2" y2="283.6" stroke="#000" stroke-width="2.8"/>
<line x1="849.8" y1="292.0" x2="858.2" y2="292.0" stroke="#000" stroke-width="2.8"/>
<line x1="849.8" y1="300.4" x2="858.2" y2="300.4" stroke="#000" stroke-width="2.8"/>
<line x1="849.8" y1="308.8" x2="858.2" y2="308.8" stroke="#000" stroke-width="2.8"/>
<line x1="849.8" y1="317.2" x2="858.2" y2="317.2" stroke="#000" stroke-width="2.8"/>
<line x1="849.8" y1="325.6" x2="858.2" y2="325.6" stroke="#000" stroke-width="2.8"/>
<line x1="858.2" y1="265.3" x2="858.2" y2="327.1" stroke="#000" stroke-width="3.4"/>
<polyline points="480.2,292.0 480.2,241.6 774.2,241.6 774.2,266.8" fill="none" stroke="#0a8a0a" stroke-width="3.2" stroke-linejoin="miter"/>
<polyline points="656.6,241.6 656.6,266.8" fill="none" stroke="#0a8a0a" stroke-width="3.2" stroke-linejoin="miter"/>
<polyline points="480.2,317.2 492.8,317.2 492.8,342.4 505.4,342.4" fill="none" stroke="#0a8a0a" stroke-width="3.2" stroke-linejoin="miter"/>
<polyline points="505.4,434.8 505.4,451.6 614.6,451.6 614.6,426.4" fill="none" stroke="#0a8a0a" stroke-width="3.2" stroke-linejoin="miter"/>
<polyline points="480.2,392.8 480.2,460.0 858.2,460.0 858.2,325.6" fill="none" stroke="#0a8a0a" stroke-width="3.2" stroke-linejoin="miter"/>
<polyline points="623.0,392.8 623.0,460.0" fill="none" stroke="#0a8a0a" stroke-width="3.2" stroke-linejoin="miter"/>
<polyline points="740.6,325.6 740.6,460.0" fill="none" stroke="#0a8a0a" stroke-width="3.2" stroke-linejoin="miter"/>
<circle cx="480.2" cy="292.0" r="1.4" fill="#0a8a0a"/>
<circle cx="480.2" cy="334.0" r="1.4" fill="#0a8a0a"/>
<circle cx="623.0" cy="334.0" r="1.4" fill="#0a8a0a"/>
<circle cx="740.6" cy="266.8" r="1.4" fill="#0a8a0a"/>
<circle cx="858.2" cy="266.8" r="1.4" fill="#0a8a0a"/>
<circle cx="614.6" cy="401.2" r="1.4" fill="#0a8a0a"/>
<circle cx="614.6" cy="426.4" r="1.4" fill="#0a8a0a"/>
<circle cx="656.6" cy="384.4" r="1.4" fill="#0a8a0a"/>
<circle cx="774.2" cy="384.4" r="1.4" fill="#0a8a0a"/>
<polyline points="287.0,216.4 287.0,325.6 379.4,325.6" fill="none" stroke="#c4483a" stroke-width="1.75" stroke-linejoin="miter"/>
<polyline points="295.4,216.4 295.4,334.0 379.4,334.0" fill="none" stroke="#3e3ec6" stroke-width="1.75" stroke-linejoin="miter"/>
<polyline points="303.8,216.4 303.8,342.4 379.4,342.4" fill="none" stroke="#3e3ec6" stroke-width="1.75" stroke-linejoin="miter"/>
<polyline points="312.2,216.4 312.2,350.8 379.4,350.8" fill="none" stroke="#c4483a" stroke-width="1.75" stroke-linejoin="miter"/>
<polyline points="320.6,216.4 320.6,359.2 379.4,359.2" fill="none" stroke="#3e3ec6" stroke-width="1.75" stroke-linejoin="miter"/>
<polyline points="329.0,216.4 329.0,367.6 379.4,367.6" fill="none" stroke="#3e3ec6" stroke-width="1.75" stroke-linejoin="miter"/>
<polyline points="337.4,216.4 337.4,376.0 379.4,376.0" fill="none" stroke="#3e3ec6" stroke-width="1.75" stroke-linejoin="miter"/>
<polyline points="345.8,216.4 345.8,384.4 379.4,384.4" fill="none" stroke="#3e3ec6" stroke-width="1.75" stroke-linejoin="miter"/>
<polyline points="354.2,216.4 354.2,392.8 379.4,392.8" fill="none" stroke="#c4483a" stroke-width="1.75" stroke-linejoin="miter"/>
<polyline points="362.6,216.4 362.6,401.2 379.4,401.2" fill="none" stroke="#3e3ec6" stroke-width="1.75" stroke-linejoin="miter"/>
<polyline points="371.0,216.4 371.0,409.6 379.4,409.6" fill="none" stroke="#3e3ec6" stroke-width="1.75" stroke-linejoin="miter"/>
<polyline points="513.8,90.4 497.0,90.4 497.0,325.6 522.2,325.6" fill="none" stroke="#3e3ec6" stroke-width="1.75" stroke-linejoin="miter"/>
<polyline points="513.8,124.0 505.4,124.0 505.4,233.2" fill="none" stroke="#3e3ec6" stroke-width="1.75" stroke-linejoin="miter"/>
<polyline points="446.6,233.2 627.2,233.2 627.2,300.4 589.4,300.4" fill="none" stroke="#3e3ec6" stroke-width="1.75" stroke-linejoin="miter"/>
<polyline points="446.6,250.0 589.4,250.0 589.4,275.2" fill="none" stroke="#c4483a" stroke-width="1.75" stroke-linejoin="miter"/>
<polyline points="455.0,250.0 455.0,325.6 446.6,325.6" fill="none" stroke="#c4483a" stroke-width="1.75" stroke-linejoin="miter"/>
<polyline points="446.6,409.6 492.8,409.6 492.8,472.6 707.0,472.6 707.0,430.6" fill="none" stroke="#3e3ec6" stroke-width="1.75" stroke-linejoin="miter"/>
<polyline points="547.4,472.6 547.4,531.4 564.2,531.4" fill="none" stroke="#3e3ec6" stroke-width="1.75" stroke-linejoin="miter"/>
<polyline points="446.6,418.0 488.6,418.0 488.6,539.8 505.4,539.8" fill="none" stroke="#c4483a" stroke-width="1.75" stroke-linejoin="miter"/>
<polyline points="488.6,502.0 711.2,502.0 711.2,489.4" fill="none" stroke="#c4483a" stroke-width="1.75" stroke-linejoin="miter"/>
<polyline points="589.4,401.2 606.2,401.2" fill="none" stroke="#c4483a" stroke-width="1.75" stroke-linejoin="miter"/>
<polyline points="602.0,401.2 602.0,434.8 648.2,434.8" fill="none" stroke="#c4483a" stroke-width="1.75" stroke-linejoin="miter"/>
<polyline points="639.8,434.8 639.8,426.4 648.2,426.4" fill="none" stroke="#c4483a" stroke-width="1.75" stroke-linejoin="miter"/>
<polyline points="589.4,409.6 606.2,409.6" fill="none" stroke="#3e3ec6" stroke-width="1.75" stroke-linejoin="miter"/>
<polyline points="597.8,409.6 597.8,485.2 648.2,485.2" fill="none" stroke="#3e3ec6" stroke-width="1.75" stroke-linejoin="miter"/>
<polyline points="589.4,418.0 606.2,418.0" fill="none" stroke="#3e3ec6" stroke-width="1.75" stroke-linejoin="miter"/>
<polyline points="593.6,418.0 593.6,493.6 648.2,493.6" fill="none" stroke="#3e3ec6" stroke-width="1.75" stroke-linejoin="miter"/>
<polyline points="589.4,426.4 606.2,426.4" fill="none" stroke="#3e3ec6" stroke-width="1.75" stroke-linejoin="miter"/>
<polyline points="681.8,430.6 799.4,430.6" fill="none" stroke="#3e3ec6" stroke-width="1.75" stroke-linejoin="miter"/>
<polyline points="690.2,430.6 690.2,418.0 698.6,418.0" fill="none" stroke="#3e3ec6" stroke-width="1.75" stroke-linejoin="miter"/>
<polyline points="732.2,430.6 732.2,401.2 723.8,401.2" fill="none" stroke="#3e3ec6" stroke-width="1.75" stroke-linejoin="miter"/>
<polyline points="681.8,489.4 765.8,489.4 765.8,439.0 799.4,439.0" fill="none" stroke="#c4483a" stroke-width="1.75" stroke-linejoin="miter"/>
<polyline points="833.0,434.8 871.64,434.8" fill="none" stroke="#c4483a" stroke-width="1.75" stroke-linejoin="miter"/>
<polyline points="849.8,434.8 849.8,401.2 841.4,401.2" fill="none" stroke="#c4483a" stroke-width="1.75" stroke-linejoin="miter"/>
<polyline points="509.6,279.4 509.6,317.2 522.2,317.2" fill="none" stroke="#c4483a" stroke-width="1.75" stroke-linejoin="miter"/>
<polyline points="509.6,283.6 522.2,283.6" fill="none" stroke="#c4483a" stroke-width="1.75" stroke-linejoin="miter"/>
<polyline points="509.6,300.4 522.2,300.4" fill="none" stroke="#c4483a" stroke-width="1.75" stroke-linejoin="miter"/>
<polyline points="786.8,384.4 786.8,401.2 791.0,401.2" fill="none" stroke="#3e3ec6" stroke-width="1.75" stroke-linejoin="miter"/>
<polyline points="782.18,392.8 791.0,392.8" fill="none" stroke="#c4483a" stroke-width="1.75" stroke-linejoin="miter"/>
<polyline points="665.0,392.8 673.4,392.8" fill="none" stroke="#c4483a" stroke-width="1.75" stroke-linejoin="miter"/>
<polyline points="670.04,401.2 673.4,401.2" fill="none" stroke="#3e3ec6" stroke-width="1.75" stroke-linejoin="miter"/>
<polyline points="446.6,292.0 471.8,292.0" fill="none" stroke="#c4483a" stroke-width="1.75" stroke-linejoin="miter"/>
<polyline points="446.6,300.4 471.8,300.4" fill="none" stroke="#c4483a" stroke-width="1.75" stroke-linejoin="miter"/>
<polyline points="446.6,308.8 471.8,308.8" fill="none" stroke="#c4483a" stroke-width="1.75" stroke-linejoin="miter"/>
<polyline points="446.6,317.2 471.8,317.2" fill="none" stroke="#c4483a" stroke-width="1.75" stroke-linejoin="miter"/>
<polyline points="446.6,334.0 471.8,334.0" fill="none" stroke="#3e3ec6" stroke-width="1.75" stroke-linejoin="miter"/>
<polyline points="446.6,342.4 471.8,342.4" fill="none" stroke="#3e3ec6" stroke-width="1.75" stroke-linejoin="miter"/>
<polyline points="446.6,350.8 471.8,350.8" fill="none" stroke="#c4483a" stroke-width="1.75" stroke-linejoin="miter"/>
<polyline points="446.6,359.2 471.8,359.2" fill="none" stroke="#c4483a" stroke-width="1.75" stroke-linejoin="miter"/>
<polyline points="446.6,367.6 471.8,367.6" fill="none" stroke="#3e3ec6" stroke-width="1.75" stroke-linejoin="miter"/>
<polyline points="446.6,376.0 471.8,376.0" fill="none" stroke="#3e3ec6" stroke-width="1.75" stroke-linejoin="miter"/>
<polyline points="446.6,384.4 471.8,384.4" fill="none" stroke="#c4483a" stroke-width="1.75" stroke-linejoin="miter"/>
<polyline points="446.6,392.8 471.8,392.8" fill="none" stroke="#3e3ec6" stroke-width="1.75" stroke-linejoin="miter"/>
<polyline points="513.8,342.4 522.2,342.4" fill="none" stroke="#c4483a" stroke-width="1.75" stroke-linejoin="miter"/>
<polyline points="513.8,350.8 522.2,350.8" fill="none" stroke="#c4483a" stroke-width="1.75" stroke-linejoin="miter"/>
<polyline points="513.8,359.2 522.2,359.2" fill="none" stroke="#c4483a" stroke-width="1.75" stroke-linejoin="miter"/>
<polyline points="513.8,367.6 522.2,367.6" fill="none" stroke="#c4483a" stroke-width="1.75" stroke-linejoin="miter"/>
<polyline points="513.8,376.0 522.2,376.0" fill="none" stroke="#3e3ec6" stroke-width="1.75" stroke-linejoin="miter"/>
<polyline points="513.8,384.4 522.2,384.4" fill="none" stroke="#c4483a" stroke-width="1.75" stroke-linejoin="miter"/>
<polyline points="513.8,392.8 522.2,392.8" fill="none" stroke="#3e3ec6" stroke-width="1.75" stroke-linejoin="miter"/>
<polyline points="513.8,401.2 522.2,401.2" fill="none" stroke="#3e3ec6" stroke-width="1.75" stroke-linejoin="miter"/>
<polyline points="513.8,409.6 522.2,409.6" fill="none" stroke="#3e3ec6" stroke-width="1.75" stroke-linejoin="miter"/>
<polyline points="513.8,418.0 522.2,418.0" fill="none" stroke="#3e3ec6" stroke-width="1.75" stroke-linejoin="miter"/>
<polyline points="513.8,426.4 522.2,426.4" fill="none" stroke="#3e3ec6" stroke-width="1.75" stroke-linejoin="miter"/>
<polyline points="513.8,434.8 522.2,434.8" fill="none" stroke="#3e3ec6" stroke-width="1.75" stroke-linejoin="miter"/>
<polyline points="589.4,334.0 614.6,334.0" fill="none" stroke="#3e3ec6" stroke-width="1.75" stroke-linejoin="miter"/>
<polyline points="589.4,342.4 614.6,342.4" fill="none" stroke="#3e3ec6" stroke-width="1.75" stroke-linejoin="miter"/>
<polyline points="589.4,350.8 614.6,350.8" fill="none" stroke="#c4483a" stroke-width="1.75" stroke-linejoin="miter"/>
<polyline points="589.4,359.2 614.6,359.2" fill="none" stroke="#c4483a" stroke-width="1.75" stroke-linejoin="miter"/>
<polyline points="589.4,367.6 614.6,367.6" fill="none" stroke="#3e3ec6" stroke-width="1.75" stroke-linejoin="miter"/>
<polyline points="589.4,376.0 614.6,376.0" fill="none" stroke="#3e3ec6" stroke-width="1.75" stroke-linejoin="miter"/>
<polyline points="589.4,384.4 614.6,384.4" fill="none" stroke="#c4483a" stroke-width="1.75" stroke-linejoin="miter"/>
<polyline points="589.4,392.8 614.6,392.8" fill="none" stroke="#3e3ec6" stroke-width="1.75" stroke-linejoin="miter"/>
<polyline points="665.0,266.8 673.4,266.8" fill="none" stroke="#c4483a" stroke-width="1.75" stroke-linejoin="miter"/>
<polyline points="665.0,275.2 673.4,275.2" fill="none" stroke="#c4483a" stroke-width="1.75" stroke-linejoin="miter"/>
<polyline points="665.0,283.6 673.4,283.6" fill="none" stroke="#c4483a" stroke-width="1.75" stroke-linejoin="miter"/>
<polyline points="665.0,292.0 673.4,292.0" fill="none" stroke="#c4483a" stroke-width="1.75" stroke-linejoin="miter"/>
<polyline points="665.0,300.4 673.4,300.4" fill="none" stroke="#3e3ec6" stroke-width="1.75" stroke-linejoin="miter"/>
<polyline points="665.0,308.8 673.4,308.8" fill="none" stroke="#c4483a" stroke-width="1.75" stroke-linejoin="miter"/>
<polyline points="665.0,317.2 673.4,317.2" fill="none" stroke="#3e3ec6" stroke-width="1.75" stroke-linejoin="miter"/>
<polyline points="665.0,325.6 673.4,325.6" fill="none" stroke="#3e3ec6" stroke-width="1.75" stroke-linejoin="miter"/>
<polyline points="665.0,334.0 673.4,334.0" fill="none" stroke="#3e3ec6" stroke-width="1.75" stroke-linejoin="miter"/>
<polyline points="665.0,342.4 673.4,342.4" fill="none" stroke="#3e3ec6" stroke-width="1.75" stroke-linejoin="miter"/>
<polyline points="665.0,350.8 673.4,350.8" fill="none" stroke="#3e3ec6" stroke-width="1.75" stroke-linejoin="miter"/>
<polyline points="665.0,359.2 673.4,359.2" fill="none" stroke="#3e3ec6" stroke-width="1.75" stroke-linejoin="miter"/>
<polyline points="665.0,367.6 673.4,367.6" fill="none" stroke="#3e3ec6" stroke-width="1.75" stroke-linejoin="miter"/>
<polyline points="665.0,376.0 673.4,376.0" fill="none" stroke="#3e3ec6" stroke-width="1.75" stroke-linejoin="miter"/>
<polyline points="665.0,384.4 673.4,384.4" fill="none" stroke="#3e3ec6" stroke-width="1.75" stroke-linejoin="miter"/>
<polyline points="723.8,266.8 732.2,266.8" fill="none" stroke="#3e3ec6" stroke-width="1.75" stroke-linejoin="miter"/>
<polyline points="723.8,275.2 732.2,275.2" fill="none" stroke="#3e3ec6" stroke-width="1.75" stroke-linejoin="miter"/>
<polyline points="723.8,283.6 732.2,283.6" fill="none" stroke="#c4483a" stroke-width="1.75" stroke-linejoin="miter"/>
<polyline points="723.8,292.0 732.2,292.0" fill="none" stroke="#c4483a" stroke-width="1.75" stroke-linejoin="miter"/>
<polyline points="723.8,300.4 732.2,300.4" fill="none" stroke="#3e3ec6" stroke-width="1.75" stroke-linejoin="miter"/>
<polyline points="723.8,308.8 732.2,308.8" fill="none" stroke="#3e3ec6" stroke-width="1.75" stroke-linejoin="miter"/>
<polyline points="723.8,317.2 732.2,317.2" fill="none" stroke="#c4483a" stroke-width="1.75" stroke-linejoin="miter"/>
<polyline points="723.8,325.6 732.2,325.6" fill="none" stroke="#3e3ec6" stroke-width="1.75" stroke-linejoin="miter"/>
<polyline points="782.6,266.8 791.0,266.8" fill="none" stroke="#c4483a" stroke-width="1.75" stroke-linejoin="miter"/>
<polyline points="782.6,275.2 791.0,275.2" fill="none" stroke="#c4483a" stroke-width="1.75" stroke-linejoin="miter"/>
<polyline points="782.6,283.6 791.0,283.6" fill="none" stroke="#c4483a" stroke-width="1.75" stroke-linejoin="miter"/>
<polyline points="782.6,292.0 791.0,292.0" fill="none" stroke="#c4483a" stroke-width="1.75" stroke-linejoin="miter"/>
<polyline points="782.6,300.4 791.0,300.4" fill="none" stroke="#3e3ec6" stroke-width="1.75" stroke-linejoin="miter"/>
<polyline points="782.6,308.8 791.0,308.8" fill="none" stroke="#c4483a" stroke-width="1.75" stroke-linejoin="miter"/>
<polyline points="782.6,317.2 791.0,317.2" fill="none" stroke="#3e3ec6" stroke-width="1.75" stroke-linejoin="miter"/>
<polyline points="782.6,325.6 791.0,325.6" fill="none" stroke="#3e3ec6" stroke-width="1.75" stroke-linejoin="miter"/>
<polyline points="782.6,334.0 791.0,334.0" fill="none" stroke="#3e3ec6" stroke-width="1.75" stroke-linejoin="miter"/>
<polyline points="782.6,342.4 791.0,342.4" fill="none" stroke="#3e3ec6" stroke-width="1.75" stroke-linejoin="miter"/>
<polyline points="782.6,350.8 791.0,350.8" fill="none" stroke="#3e3ec6" stroke-width="1.75" stroke-linejoin="miter"/>
<polyline points="782.6,359.2 791.0,359.2" fill="none" stroke="#3e3ec6" stroke-width="1.75" stroke-linejoin="miter"/>
<polyline points="782.6,367.6 791.0,367.6" fill="none" stroke="#3e3ec6" stroke-width="1.75" stroke-linejoin="miter"/>
<polyline points="782.6,376.0 791.0,376.0" fill="none" stroke="#3e3ec6" stroke-width="1.75" stroke-linejoin="miter"/>
<polyline points="782.6,384.4 791.0,384.4" fill="none" stroke="#3e3ec6" stroke-width="1.75" stroke-linejoin="miter"/>
<polyline points="841.4,266.8 849.8,266.8" fill="none" stroke="#3e3ec6" stroke-width="1.75" stroke-linejoin="miter"/>
<polyline points="841.4,275.2 849.8,275.2" fill="none" stroke="#3e3ec6" stroke-width="1.75" stroke-linejoin="miter"/>
<polyline points="841.4,283.6 849.8,283.6" fill="none" stroke="#c4483a" stroke-width="1.75" stroke-linejoin="miter"/>
<polyline points="841.4,292.0 849.8,292.0" fill="none" stroke="#c4483a" stroke-width="1.75" stroke-linejoin="miter"/>
<polyline points="841.4,300.4 849.8,300.4" fill="none" stroke="#3e3ec6" stroke-width="1.75" stroke-linejoin="miter"/>
<polyline points="841.4,308.8 849.8,308.8" fill="none" stroke="#3e3ec6" stroke-width="1.75" stroke-linejoin="miter"/>
<polyline points="841.4,317.2 849.8,317.2" fill="none" stroke="#c4483a" stroke-width="1.75" stroke-linejoin="miter"/>
<polyline points="841.4,325.6 849.8,325.6" fill="none" stroke="#3e3ec6" stroke-width="1.75" stroke-linejoin="miter"/>
<text x="485.70" y="293.30" font-family="'Liberation Mono', monospace" font-size="3.6" fill="#444" text-anchor="start">0</text>
<text x="485.70" y="301.70" font-family="'Liberation Mono', monospace" font-size="3.6" fill="#444" text-anchor="start">1</text>
<text x="485.70" y="310.10" font-family="'Liberation Mono', monospace" font-size="3.6" fill="#444" text-anchor="start">2</text>
<text x="485.70" y="318.50" font-family="'Liberation Mono', monospace" font-size="3.6" fill="#444" text-anchor="start">3</text>
<text x="485.70" y="335.30" font-family="'Liberation Mono', monospace" font-size="3.6" fill="#444" text-anchor="start">0</text>
<text x="485.70" y="343.70" font-family="'Liberation Mono', monospace" font-size="3.6" fill="#444" text-anchor="start">1</text>
<text x="485.70" y="352.10" font-family="'Liberation Mono', monospace" font-size="3.6" fill="#444" text-anchor="start">2</text>
<text x="485.70" y="360.50" font-family="'Liberation Mono', monospace" font-size="3.6" fill="#444" text-anchor="start">3</text>
<text x="485.70" y="368.90" font-family="'Liberation Mono', monospace" font-size="3.6" fill="#444" text-anchor="start">4</text>
<text x="485.70" y="377.30" font-family="'Liberation Mono', monospace" font-size="3.6" fill="#444" text-anchor="start">5</text>
<text x="485.70" y="385.70" font-family="'Liberation Mono', monospace" font-size="3.6" fill="#444" text-anchor="start">6</text>
<text x="485.70" y="394.10" font-family="'Liberation Mono', monospace" font-size="3.6" fill="#444" text-anchor="start">7</text>
<text x="502.40" y="343.70" font-family="'Liberation Mono', monospace" font-size="3.6" fill="#444" text-anchor="end">0</text>
<text x="502.40" y="352.10" font-family="'Liberation Mono', monospace" font-size="3.6" fill="#444" text-anchor="end">1</text>
<text x="502.40" y="360.50" font-family="'Liberation Mono', monospace" font-size="3.6" fill="#444" text-anchor="end">2</text>
<text x="502.40" y="368.90" font-family="'Liberation Mono', monospace" font-size="3.6" fill="#444" text-anchor="end">3</text>
<text x="502.40" y="377.30" font-family="'Liberation Mono', monospace" font-size="3.6" fill="#444" text-anchor="end">4</text>
<text x="502.40" y="385.70" font-family="'Liberation Mono', monospace" font-size="3.6" fill="#444" text-anchor="end">5</text>
<text x="502.40" y="394.10" font-family="'Liberation Mono', monospace" font-size="3.6" fill="#444" text-anchor="end">6</text>
<text x="502.40" y="402.50" font-family="'Liberation Mono', monospace" font-size="3.6" fill="#444" text-anchor="end">7</text>
<text x="502.40" y="410.90" font-family="'Liberation Mono', monospace" font-size="3.6" fill="#444" text-anchor="end">8</text>
<text x="502.40" y="419.30" font-family="'Liberation Mono', monospace" font-size="3.6" fill="#444" text-anchor="end">9</text>
<text x="502.40" y="427.70" font-family="'Liberation Mono', monospace" font-size="3.6" fill="#444" text-anchor="end">10</text>
<text x="502.40" y="436.10" font-family="'Liberation Mono', monospace" font-size="3.6" fill="#444" text-anchor="end">11</text>
<text x="620.10" y="402.50" font-family="'Liberation Mono', monospace" font-size="3.6" fill="#444" text-anchor="start">12</text>
<text x="620.10" y="410.90" font-family="'Liberation Mono', monospace" font-size="3.6" fill="#444" text-anchor="start">13</text>
<text x="620.10" y="419.30" font-family="'Liberation Mono', monospace" font-size="3.6" fill="#444" text-anchor="start">14</text>
<text x="620.10" y="427.70" font-family="'Liberation Mono', monospace" font-size="3.6" fill="#444" text-anchor="start">15</text>
<text x="628.50" y="335.30" font-family="'Liberation Mono', monospace" font-size="3.6" fill="#444" text-anchor="start">0</text>
<text x="628.50" y="343.70" font-family="'Liberation Mono', monospace" font-size="3.6" fill="#444" text-anchor="start">1</text>
<text x="628.50" y="352.10" font-family="'Liberation Mono', monospace" font-size="3.6" fill="#444" text-anchor="start">2</text>
<text x="628.50" y="360.50" font-family="'Liberation Mono', monospace" font-size="3.6" fill="#444" text-anchor="start">3</text>
<text x="628.50" y="368.90" font-family="'Liberation Mono', monospace" font-size="3.6" fill="#444" text-anchor="start">4</text>
<text x="628.50" y="377.30" font-family="'Liberation Mono', monospace" font-size="3.6" fill="#444" text-anchor="start">5</text>
<text x="628.50" y="385.70" font-family="'Liberation Mono', monospace" font-size="3.6" fill="#444" text-anchor="start">6</text>
<text x="628.50" y="394.10" font-family="'Liberation Mono', monospace" font-size="3.6" fill="#444" text-anchor="start">7</text>
<text x="653.60" y="268.10" font-family="'Liberation Mono', monospace" font-size="3.6" fill="#444" text-anchor="end">0</text>
<text x="653.60" y="276.50" font-family="'Liberation Mono', monospace" font-size="3.6" fill="#444" text-anchor="end">1</text>
<text x="653.60" y="284.90" font-family="'Liberation Mono', monospace" font-size="3.6" fill="#444" text-anchor="end">2</text>
<text x="653.60" y="293.30" font-family="'Liberation Mono', monospace" font-size="3.6" fill="#444" text-anchor="end">3</text>
<text x="653.60" y="301.70" font-family="'Liberation Mono', monospace" font-size="3.6" fill="#444" text-anchor="end">4</text>
<text x="653.60" y="310.10" font-family="'Liberation Mono', monospace" font-size="3.6" fill="#444" text-anchor="end">5</text>
<text x="653.60" y="318.50" font-family="'Liberation Mono', monospace" font-size="3.6" fill="#444" text-anchor="end">6</text>
<text x="653.60" y="326.90" font-family="'Liberation Mono', monospace" font-size="3.6" fill="#444" text-anchor="end">7</text>
<text x="653.60" y="335.30" font-family="'Liberation Mono', monospace" font-size="3.6" fill="#444" text-anchor="end">8</text>
<text x="653.60" y="343.70" font-family="'Liberation Mono', monospace" font-size="3.6" fill="#444" text-anchor="end">9</text>
<text x="653.60" y="352.10" font-family="'Liberation Mono', monospace" font-size="3.6" fill="#444" text-anchor="end">10</text>
<text x="653.60" y="360.50" font-family="'Liberation Mono', monospace" font-size="3.6" fill="#444" text-anchor="end">11</text>
<text x="653.60" y="368.90" font-family="'Liberation Mono', monospace" font-size="3.6" fill="#444" text-anchor="end">12</text>
<text x="653.60" y="377.30" font-family="'Liberation Mono', monospace" font-size="3.6" fill="#444" text-anchor="end">13</text>
<text x="653.60" y="385.70" font-family="'Liberation Mono', monospace" font-size="3.6" fill="#444" text-anchor="end">14</text>
<text x="746.10" y="268.10" font-family="'Liberation Mono', monospace" font-size="3.6" fill="#444" text-anchor="start">0</text>
<text x="746.10" y="276.50" font-family="'Liberation Mono', monospace" font-size="3.6" fill="#444" text-anchor="start">1</text>
<text x="746.10" y="284.90" font-family="'Liberation Mono', monospace" font-size="3.6" fill="#444" text-anchor="start">2</text>
<text x="746.10" y="293.30" font-family="'Liberation Mono', monospace" font-size="3.6" fill="#444" text-anchor="start">3</text>
<text x="746.10" y="301.70" font-family="'Liberation Mono', monospace" font-size="3.6" fill="#444" text-anchor="start">4</text>
<text x="746.10" y="310.10" font-family="'Liberation Mono', monospace" font-size="3.6" fill="#444" text-anchor="start">5</text>
<text x="746.10" y="318.50" font-family="'Liberation Mono', monospace" font-size="3.6" fill="#444" text-anchor="start">6</text>
<text x="746.10" y="326.90" font-family="'Liberation Mono', monospace" font-size="3.6" fill="#444" text-anchor="start">7</text>
<text x="771.20" y="268.10" font-family="'Liberation Mono', monospace" font-size="3.6" fill="#444" text-anchor="end">0</text>
<text x="771.20" y="276.50" font-family="'Liberation Mono', monospace" font-size="3.6" fill="#444" text-anchor="end">1</text>
<text x="771.20" y="284.90" font-family="'Liberation Mono', monospace" font-size="3.6" fill="#444" text-anchor="end">2</text>
<text x="771.20" y="293.30" font-family="'Liberation Mono', monospace" font-size="3.6" fill="#444" text-anchor="end">3</text>
<text x="771.20" y="301.70" font-family="'Liberation Mono', monospace" font-size="3.6" fill="#444" text-anchor="end">4</text>
<text x="771.20" y="310.10" font-family="'Liberation Mono', monospace" font-size="3.6" fill="#444" text-anchor="end">5</text>
<text x="771.20" y="318.50" font-family="'Liberation Mono', monospace" font-size="3.6" fill="#444" text-anchor="end">6</text>
<text x="771.20" y="326.90" font-family="'Liberation Mono', monospace" font-size="3.6" fill="#444" text-anchor="end">7</text>
<text x="771.20" y="335.30" font-family="'Liberation Mono', monospace" font-size="3.6" fill="#444" text-anchor="end">8</text>
<text x="771.20" y="343.70" font-family="'Liberation Mono', monospace" font-size="3.6" fill="#444" text-anchor="end">9</text>
<text x="771.20" y="352.10" font-family="'Liberation Mono', monospace" font-size="3.6" fill="#444" text-anchor="end">10</text>
<text x="771.20" y="360.50" font-family="'Liberation Mono', monospace" font-size="3.6" fill="#444" text-anchor="end">11</text>
<text x="771.20" y="368.90" font-family="'Liberation Mono', monospace" font-size="3.6" fill="#444" text-anchor="end">12</text>
<text x="771.20" y="377.30" font-family="'Liberation Mono', monospace" font-size="3.6" fill="#444" text-anchor="end">13</text>
<text x="771.20" y="385.70" font-family="'Liberation Mono', monospace" font-size="3.6" fill="#444" text-anchor="end">14</text>
<text x="863.70" y="268.10" font-family="'Liberation Mono', monospace" font-size="3.6" fill="#444" text-anchor="start">0</text>
<text x="863.70" y="276.50" font-family="'Liberation Mono', monospace" font-size="3.6" fill="#444" text-anchor="start">1</text>
<text x="863.70" y="284.90" font-family="'Liberation Mono', monospace" font-size="3.6" fill="#444" text-anchor="start">2</text>
<text x="863.70" y="293.30" font-family="'Liberation Mono', monospace" font-size="3.6" fill="#444" text-anchor="start">3</text>
<text x="863.70" y="301.70" font-family="'Liberation Mono', monospace" font-size="3.6" fill="#444" text-anchor="start">4</text>
<text x="863.70" y="310.10" font-family="'Liberation Mono', monospace" font-size="3.6" fill="#444" text-anchor="start">5</text>
<text x="863.70" y="318.50" font-family="'Liberation Mono', monospace" font-size="3.6" fill="#444" text-anchor="start">6</text>
<text x="863.70" y="326.90" font-family="'Liberation Mono', monospace" font-size="3.6" fill="#444" text-anchor="start">7</text>
<circle cx="505.4" cy="233.2" r="2.3" fill="#000"/>
<circle cx="455.0" cy="250.0" r="2.3" fill="#000"/>
<circle cx="656.6" cy="241.6" r="2.3" fill="#000"/>
<circle cx="509.6" cy="283.6" r="2.3" fill="#000"/>
<circle cx="509.6" cy="300.4" r="2.3" fill="#000"/>
<circle cx="602.0" cy="401.2" r="2.3" fill="#000"/>
<circle cx="597.8" cy="409.6" r="2.3" fill="#000"/>
<circle cx="593.6" cy="418.0" r="2.3" fill="#000"/>
<circle cx="639.8" cy="434.8" r="2.3" fill="#000"/>
<circle cx="690.2" cy="430.6" r="2.3" fill="#000"/>
<circle cx="707.0" cy="430.6" r="2.3" fill="#000"/>
<circle cx="732.2" cy="430.6" r="2.3" fill="#000"/>
<circle cx="849.8" cy="434.8" r="2.3" fill="#000"/>
<circle cx="711.2" cy="489.4" r="2.3" fill="#000"/>
<circle cx="488.6" cy="502.0" r="2.3" fill="#000"/>
<circle cx="547.4" cy="472.6" r="2.3" fill="#000"/>
<circle cx="623.0" cy="460.0" r="2.3" fill="#000"/>
<circle cx="740.6" cy="460.0" r="2.3" fill="#000"/>
<circle cx="786.8" cy="384.4" r="2.3" fill="#000"/>
<rect x="270" y="137.2" width="221" height="71" rx="2" fill="#324664"/>
<rect x="270.6" y="137.8" width="219.8" height="69.8" rx="1.5" fill="none" stroke="#26364e" stroke-width="1.2"/>
<rect x="274" y="142" width="212.6" height="48.6" rx="6.5" fill="#c8dcb4" stroke="#1c2a40" stroke-width="1"/>
<text x="279.30" y="164.20" font-family="'Liberation Mono', sans-serif" font-size="20.5" font-weight="bold" fill="#101010" text-anchor="start" textLength="176.2" lengthAdjust="spacingAndGlyphs" xml:space="preserve">Hello, world!_</text>
<text transform="translate(289.40,206.4) rotate(-90)" font-family="'Liberation Mono', monospace" font-size="7.2" fill="#f4f4f4" textLength="7.7" lengthAdjust="spacingAndGlyphs">RS</text>
<text transform="translate(297.80,206.4) rotate(-90)" font-family="'Liberation Mono', monospace" font-size="7.2" fill="#f4f4f4" textLength="7.7" lengthAdjust="spacingAndGlyphs">RW</text>
<text transform="translate(306.20,206.4) rotate(-90)" font-family="'Liberation Mono', monospace" font-size="7.2" fill="#f4f4f4" textLength="7.7" lengthAdjust="spacingAndGlyphs">En</text>
<text transform="translate(314.60,206.4) rotate(-90)" font-family="'Liberation Mono', monospace" font-size="7.2" fill="#f4f4f4" textLength="7.7" lengthAdjust="spacingAndGlyphs">D0</text>
<text transform="translate(323.00,206.4) rotate(-90)" font-family="'Liberation Mono', monospace" font-size="7.2" fill="#f4f4f4" textLength="7.7" lengthAdjust="spacingAndGlyphs">D1</text>
<text transform="translate(331.40,206.4) rotate(-90)" font-family="'Liberation Mono', monospace" font-size="7.2" fill="#f4f4f4" textLength="7.7" lengthAdjust="spacingAndGlyphs">D2</text>
<text transform="translate(339.80,206.4) rotate(-90)" font-family="'Liberation Mono', monospace" font-size="7.2" fill="#f4f4f4" textLength="7.7" lengthAdjust="spacingAndGlyphs">D3</text>
<text transform="translate(348.20,206.4) rotate(-90)" font-family="'Liberation Mono', monospace" font-size="7.2" fill="#f4f4f4" textLength="7.7" lengthAdjust="spacingAndGlyphs">D4</text>
<text transform="translate(356.60,206.4) rotate(-90)" font-family="'Liberation Mono', monospace" font-size="7.2" fill="#f4f4f4" textLength="7.7" lengthAdjust="spacingAndGlyphs">D5</text>
<text transform="translate(365.00,206.4) rotate(-90)" font-family="'Liberation Mono', monospace" font-size="7.2" fill="#f4f4f4" textLength="7.7" lengthAdjust="spacingAndGlyphs">D6</text>
<text transform="translate(373.40,206.4) rotate(-90)" font-family="'Liberation Mono', monospace" font-size="7.2" fill="#f4f4f4" textLength="7.7" lengthAdjust="spacingAndGlyphs">D7</text>
<text x="378.50" y="132.60" font-family="'Liberation Sans', sans-serif" font-size="10.4" font-weight="normal" fill="#33337c" text-anchor="middle">Hd44780-1442</text>
<rect x="396.8" y="225.6" width="15.6" height="15.8" rx="3" fill="url(#btng)" stroke="#b4b4b4" stroke-width="1"/>
<rect x="396.8" y="242.4" width="15.6" height="15.8" rx="3" fill="url(#btng)" stroke="#b4b4b4" stroke-width="1"/>
<line x1="438.20" y1="233.20" x2="446.60" y2="233.20" stroke="#0000c8" stroke-width="3.1"/>
<polygon points="448.20,233.20 443.40,235.90 443.40,230.50" fill="#0000c8"/>
<line x1="438.20" y1="250.00" x2="446.60" y2="250.00" stroke="#c80000" stroke-width="3.1"/>
<polygon points="448.20,250.00 443.40,252.70 443.40,247.30" fill="#c80000"/>
<rect x="415.4" y="224.6" width="22.8" height="17.4" rx="2.5" fill="#ffc832" stroke="#2e2406" stroke-width="1.4"/>
<polyline points="418.5,235.4 418.5,230.2 424.7,230.2 424.7,236.4 430.8,236.4 430.8,230.2 434.4,230.2" fill="none" stroke="#3a3000" stroke-width="1.3"/>
<rect x="421.8" y="242.2" width="16.4" height="16.2" rx="2.5" fill="#ffa500" stroke="#2e1e04" stroke-width="1.4"/>
<text x="393.60" y="237.90" font-family="'Liberation Sans', sans-serif" font-size="10.6" font-weight="normal" fill="#33337c" text-anchor="end">Clock</text>
<text x="362.80" y="253.50" font-family="'Liberation Sans', sans-serif" font-size="10.6" font-weight="normal" fill="#33337c" text-anchor="start" textLength="29.6" lengthAdjust="spacingAndGlyphs">RESET</text>
<line x1="387.80" y1="275.20" x2="379.00" y2="275.20" stroke="#5a87aa" stroke-width="2.9" stroke-linecap="round"/>
<line x1="387.80" y1="283.60" x2="379.40" y2="283.60" stroke="#6464f5" stroke-width="3.1"/>
<polygon points="377.80,283.60 382.60,280.90 382.60,286.30" fill="#6464f5"/>
<line x1="387.80" y1="292.00" x2="379.40" y2="292.00" stroke="#6464f5" stroke-width="3.1"/>
<polygon points="377.80,292.00 382.60,289.30 382.60,294.70" fill="#6464f5"/>
<line x1="387.80" y1="300.40" x2="379.40" y2="300.40" stroke="#6464f5" stroke-width="3.1"/>
<polygon points="377.80,300.40 382.60,297.70 382.60,303.10" fill="#6464f5"/>
<line x1="387.80" y1="308.80" x2="379.40" y2="308.80" stroke="#6464f5" stroke-width="3.1"/>
<polygon points="377.80,308.80 382.60,306.10 382.60,311.50" fill="#6464f5"/>
<line x1="387.80" y1="317.20" x2="379.40" y2="317.20" stroke="#6464f5" stroke-width="3.1"/>
<polygon points="377.80,317.20 382.60,314.50 382.60,319.90" fill="#6464f5"/>
<line x1="387.80" y1="325.60" x2="379.40" y2="325.60" stroke="#c80000" stroke-width="3.1"/>
<polygon points="377.80,325.60 382.60,322.90 382.60,328.30" fill="#c80000"/>
<line x1="387.80" y1="334.00" x2="379.40" y2="334.00" stroke="#0000c8" stroke-width="3.1"/>
<polygon points="377.80,334.00 382.60,331.30 382.60,336.70" fill="#0000c8"/>
<line x1="387.80" y1="342.40" x2="379.40" y2="342.40" stroke="#0000c8" stroke-width="3.1"/>
<polygon points="377.80,342.40 382.60,339.70 382.60,345.10" fill="#0000c8"/>
<line x1="387.80" y1="350.80" x2="379.40" y2="350.80" stroke="#c80000" stroke-width="3.1"/>
<polygon points="377.80,350.80 382.60,348.10 382.60,353.50" fill="#c80000"/>
<line x1="387.80" y1="359.20" x2="379.40" y2="359.20" stroke="#0000c8" stroke-width="3.1"/>
<polygon points="377.80,359.20 382.60,356.50 382.60,361.90" fill="#0000c8"/>
<line x1="387.80" y1="367.60" x2="379.40" y2="367.60" stroke="#0000c8" stroke-width="3.1"/>
<polygon points="377.80,367.60 382.60,364.90 382.60,370.30" fill="#0000c8"/>
<line x1="387.80" y1="376.00" x2="379.40" y2="376.00" stroke="#0000c8" stroke-width="3.1"/>
<polygon points="377.80,376.00 382.60,373.30 382.60,378.70" fill="#0000c8"/>
<line x1="387.80" y1="384.40" x2="379.40" y2="384.40" stroke="#0000c8" stroke-width="3.1"/>
<polygon points="377.80,384.40 382.60,381.70 382.60,387.10" fill="#0000c8"/>
<line x1="387.80" y1="392.80" x2="379.40" y2="392.80" stroke="#c80000" stroke-width="3.1"/>
<polygon points="377.80,392.80 382.60,390.10 382.60,395.50" fill="#c80000"/>
<line x1="387.80" y1="401.20" x2="379.40" y2="401.20" stroke="#0000c8" stroke-width="3.1"/>
<polygon points="377.80,401.20 382.60,398.50 382.60,403.90" fill="#0000c8"/>
<line x1="387.80" y1="409.60" x2="379.40" y2="409.60" stroke="#0000c8" stroke-width="3.1"/>
<polygon points="377.80,409.60 382.60,406.90 382.60,412.30" fill="#0000c8"/>
<line x1="387.80" y1="418.00" x2="379.40" y2="418.00" stroke="#6464f5" stroke-width="3.1"/>
<polygon points="377.80,418.00 382.60,415.30 382.60,420.70" fill="#6464f5"/>
<line x1="387.80" y1="426.40" x2="379.40" y2="426.40" stroke="#6464f5" stroke-width="3.1"/>
<polygon points="377.80,426.40 382.60,423.70 382.60,429.10" fill="#6464f5"/>
<line x1="387.80" y1="434.80" x2="379.00" y2="434.80" stroke="#5a87aa" stroke-width="2.9" stroke-linecap="round"/>
<line x1="438.20" y1="275.20" x2="446.60" y2="275.20" stroke="#6464f5" stroke-width="3.1"/>
<polygon points="448.20,275.20 443.40,277.90 443.40,272.50" fill="#6464f5"/>
<line x1="438.20" y1="283.60" x2="446.60" y2="283.60" stroke="#6464f5" stroke-width="3.1"/>
<polygon points="448.20,283.60 443.40,286.30 443.40,280.90" fill="#6464f5"/>
<line x1="438.20" y1="292.00" x2="446.60" y2="292.00" stroke="#6464f5" stroke-width="3.1"/>
<polygon points="443.00,292.00 446.60,294.80 447.40,292.00 446.60,289.20" fill="#6464f5"/>
<line x1="438.20" y1="300.40" x2="446.60" y2="300.40" stroke="#6464f5" stroke-width="3.1"/>
<polygon points="443.00,300.40 446.60,303.20 447.40,300.40 446.60,297.60" fill="#6464f5"/>
<line x1="438.20" y1="308.80" x2="446.60" y2="308.80" stroke="#6464f5" stroke-width="3.1"/>
<polygon points="443.00,308.80 446.60,311.60 447.40,308.80 446.60,306.00" fill="#6464f5"/>
<line x1="438.20" y1="317.20" x2="446.60" y2="317.20" stroke="#6464f5" stroke-width="3.1"/>
<polygon points="443.00,317.20 446.60,320.00 447.40,317.20 446.60,314.40" fill="#6464f5"/>
<line x1="438.20" y1="325.60" x2="446.60" y2="325.60" stroke="#fa8200" stroke-width="3.1"/>
<polygon points="443.00,325.60 446.60,328.40 447.40,325.60 446.60,322.80" fill="#fa8200"/>
<line x1="438.20" y1="334.00" x2="446.60" y2="334.00" stroke="#fa8200" stroke-width="3.1"/>
<polygon points="443.00,334.00 446.60,336.80 447.40,334.00 446.60,331.20" fill="#fa8200"/>
<line x1="438.20" y1="342.40" x2="446.60" y2="342.40" stroke="#fa8200" stroke-width="3.1"/>
<polygon points="443.00,342.40 446.60,345.20 447.40,342.40 446.60,339.60" fill="#fa8200"/>
<line x1="438.20" y1="350.80" x2="446.60" y2="350.80" stroke="#fa8200" stroke-width="3.1"/>
<polygon points="443.00,350.80 446.60,353.60 447.40,350.80 446.60,348.00" fill="#fa8200"/>
<line x1="438.20" y1="359.20" x2="446.60" y2="359.20" stroke="#fa8200" stroke-width="3.1"/>
<polygon points="443.00,359.20 446.60,362.00 447.40,359.20 446.60,356.40" fill="#fa8200"/>
<line x1="438.20" y1="367.60" x2="446.60" y2="367.60" stroke="#6464f5" stroke-width="3.1"/>
<polygon points="443.00,367.60 446.60,370.40 447.40,367.60 446.60,364.80" fill="#6464f5"/>
<line x1="438.20" y1="376.00" x2="446.60" y2="376.00" stroke="#fa8200" stroke-width="3.1"/>
<polygon points="443.00,376.00 446.60,378.80 447.40,376.00 446.60,373.20" fill="#fa8200"/>
<line x1="438.20" y1="384.40" x2="446.60" y2="384.40" stroke="#6464f5" stroke-width="3.1"/>
<polygon points="443.00,384.40 446.60,387.20 447.40,384.40 446.60,381.60" fill="#6464f5"/>
<line x1="438.20" y1="392.80" x2="446.60" y2="392.80" stroke="#6464f5" stroke-width="3.1"/>
<polygon points="443.00,392.80 446.60,395.60 447.40,392.80 446.60,390.00" fill="#6464f5"/>
<line x1="438.20" y1="401.20" x2="446.60" y2="401.20" stroke="#6464f5" stroke-width="3.1"/>
<polygon points="443.00,401.20 446.60,404.00 447.40,401.20 446.60,398.40" fill="#6464f5"/>
<line x1="438.20" y1="409.60" x2="446.60" y2="409.60" stroke="#6464f5" stroke-width="3.1"/>
<polygon points="443.00,409.60 446.60,412.40 447.40,409.60 446.60,406.80" fill="#6464f5"/>
<line x1="438.20" y1="418.00" x2="446.60" y2="418.00" stroke="#fa8200" stroke-width="3.1"/>
<polygon points="443.00,418.00 446.60,420.80 447.40,418.00 446.60,415.20" fill="#fa8200"/>
<line x1="438.20" y1="426.40" x2="446.60" y2="426.40" stroke="#fa8200" stroke-width="3.1"/>
<polygon points="443.00,426.40 446.60,429.20 447.40,426.40 446.60,423.60" fill="#fa8200"/>
<line x1="438.20" y1="434.80" x2="446.60" y2="434.80" stroke="#6464f5" stroke-width="3.1"/>
<polygon points="448.20,434.80 443.40,437.50 443.40,432.10" fill="#6464f5"/>
<rect x="387.40" y="266.50" width="51.40" height="177.30" rx="1.2" fill="#141e3c"/>
<text x="389.90" y="277.70" font-family="'Liberation Mono', sans-serif" font-size="7" font-weight="bold" fill="#f4f4f4" text-anchor="start" textLength="10.65" lengthAdjust="spacingAndGlyphs">Vss</text>
<text x="389.90" y="286.10" font-family="'Liberation Mono', sans-serif" font-size="7" font-weight="bold" fill="#f4f4f4" text-anchor="start" textLength="10.65" lengthAdjust="spacingAndGlyphs">PA0</text>
<text x="389.90" y="294.50" font-family="'Liberation Mono', sans-serif" font-size="7" font-weight="bold" fill="#f4f4f4" text-anchor="start" textLength="10.65" lengthAdjust="spacingAndGlyphs">PA1</text>
<text x="389.90" y="302.90" font-family="'Liberation Mono', sans-serif" font-size="7" font-weight="bold" fill="#f4f4f4" text-anchor="start" textLength="10.65" lengthAdjust="spacingAndGlyphs">PA2</text>
<text x="389.90" y="311.30" font-family="'Liberation Mono', sans-serif" font-size="7" font-weight="bold" fill="#f4f4f4" text-anchor="start" textLength="10.65" lengthAdjust="spacingAndGlyphs">PA3</text>
<text x="389.90" y="319.70" font-family="'Liberation Mono', sans-serif" font-size="7" font-weight="bold" fill="#f4f4f4" text-anchor="start" textLength="10.65" lengthAdjust="spacingAndGlyphs">PA4</text>
<text x="389.90" y="328.10" font-family="'Liberation Mono', sans-serif" font-size="7" font-weight="bold" fill="#f4f4f4" text-anchor="start" textLength="10.65" lengthAdjust="spacingAndGlyphs">PA5</text>
<text x="389.90" y="336.50" font-family="'Liberation Mono', sans-serif" font-size="7" font-weight="bold" fill="#f4f4f4" text-anchor="start" textLength="10.65" lengthAdjust="spacingAndGlyphs">PA6</text>
<text x="389.90" y="344.90" font-family="'Liberation Mono', sans-serif" font-size="7" font-weight="bold" fill="#f4f4f4" text-anchor="start" textLength="10.65" lengthAdjust="spacingAndGlyphs">PA7</text>
<text x="389.90" y="353.30" font-family="'Liberation Mono', sans-serif" font-size="7" font-weight="bold" fill="#f4f4f4" text-anchor="start" textLength="10.65" lengthAdjust="spacingAndGlyphs">PB0</text>
<text x="389.90" y="361.70" font-family="'Liberation Mono', sans-serif" font-size="7" font-weight="bold" fill="#f4f4f4" text-anchor="start" textLength="10.65" lengthAdjust="spacingAndGlyphs">PB1</text>
<text x="389.90" y="370.10" font-family="'Liberation Mono', sans-serif" font-size="7" font-weight="bold" fill="#f4f4f4" text-anchor="start" textLength="10.65" lengthAdjust="spacingAndGlyphs">PB2</text>
<text x="389.90" y="378.50" font-family="'Liberation Mono', sans-serif" font-size="7" font-weight="bold" fill="#f4f4f4" text-anchor="start" textLength="10.65" lengthAdjust="spacingAndGlyphs">PB3</text>
<text x="389.90" y="386.90" font-family="'Liberation Mono', sans-serif" font-size="7" font-weight="bold" fill="#f4f4f4" text-anchor="start" textLength="10.65" lengthAdjust="spacingAndGlyphs">PB4</text>
<text x="389.90" y="395.30" font-family="'Liberation Mono', sans-serif" font-size="7" font-weight="bold" fill="#f4f4f4" text-anchor="start" textLength="10.65" lengthAdjust="spacingAndGlyphs">PB5</text>
<text x="389.90" y="403.70" font-family="'Liberation Mono', sans-serif" font-size="7" font-weight="bold" fill="#f4f4f4" text-anchor="start" textLength="10.65" lengthAdjust="spacingAndGlyphs">PB6</text>
<text x="389.90" y="412.10" font-family="'Liberation Mono', sans-serif" font-size="7" font-weight="bold" fill="#f4f4f4" text-anchor="start" textLength="10.65" lengthAdjust="spacingAndGlyphs">PB7</text>
<text x="389.90" y="420.50" font-family="'Liberation Mono', sans-serif" font-size="7" font-weight="bold" fill="#f4f4f4" text-anchor="start" textLength="10.65" lengthAdjust="spacingAndGlyphs">CB1</text>
<text x="389.90" y="428.90" font-family="'Liberation Mono', sans-serif" font-size="7" font-weight="bold" fill="#f4f4f4" text-anchor="start" textLength="10.65" lengthAdjust="spacingAndGlyphs">CB2</text>
<text x="389.90" y="437.30" font-family="'Liberation Mono', sans-serif" font-size="7" font-weight="bold" fill="#f4f4f4" text-anchor="start" textLength="10.65" lengthAdjust="spacingAndGlyphs">Vdd</text>
<text x="426.05" y="277.70" font-family="'Liberation Mono', sans-serif" font-size="7" font-weight="bold" fill="#f4f4f4" text-anchor="start" textLength="10.65" lengthAdjust="spacingAndGlyphs">CA1</text>
<text x="426.05" y="286.10" font-family="'Liberation Mono', sans-serif" font-size="7" font-weight="bold" fill="#f4f4f4" text-anchor="start" textLength="10.65" lengthAdjust="spacingAndGlyphs">CA2</text>
<text x="426.05" y="294.50" font-family="'Liberation Mono', sans-serif" font-size="7" font-weight="bold" fill="#f4f4f4" text-anchor="start" textLength="10.65" lengthAdjust="spacingAndGlyphs">RS0</text>
<text x="426.05" y="302.90" font-family="'Liberation Mono', sans-serif" font-size="7" font-weight="bold" fill="#f4f4f4" text-anchor="start" textLength="10.65" lengthAdjust="spacingAndGlyphs">RS1</text>
<text x="426.05" y="311.30" font-family="'Liberation Mono', sans-serif" font-size="7" font-weight="bold" fill="#f4f4f4" text-anchor="start" textLength="10.65" lengthAdjust="spacingAndGlyphs">RS2</text>
<text x="426.05" y="319.70" font-family="'Liberation Mono', sans-serif" font-size="7" font-weight="bold" fill="#f4f4f4" text-anchor="start" textLength="10.65" lengthAdjust="spacingAndGlyphs">RS3</text>
<text x="426.05" y="328.10" font-family="'Liberation Mono', sans-serif" font-size="7" font-weight="bold" fill="#f4f4f4" text-anchor="start" textLength="10.65" lengthAdjust="spacingAndGlyphs">Rst</text>
<text x="429.60" y="336.50" font-family="'Liberation Mono', sans-serif" font-size="7" font-weight="bold" fill="#f4f4f4" text-anchor="start" textLength="7.1" lengthAdjust="spacingAndGlyphs">D0</text>
<text x="429.60" y="344.90" font-family="'Liberation Mono', sans-serif" font-size="7" font-weight="bold" fill="#f4f4f4" text-anchor="start" textLength="7.1" lengthAdjust="spacingAndGlyphs">D1</text>
<text x="429.60" y="353.30" font-family="'Liberation Mono', sans-serif" font-size="7" font-weight="bold" fill="#f4f4f4" text-anchor="start" textLength="7.1" lengthAdjust="spacingAndGlyphs">D2</text>
<text x="429.60" y="361.70" font-family="'Liberation Mono', sans-serif" font-size="7" font-weight="bold" fill="#f4f4f4" text-anchor="start" textLength="7.1" lengthAdjust="spacingAndGlyphs">D3</text>
<text x="429.60" y="370.10" font-family="'Liberation Mono', sans-serif" font-size="7" font-weight="bold" fill="#f4f4f4" text-anchor="start" textLength="7.1" lengthAdjust="spacingAndGlyphs">D4</text>
<text x="429.60" y="378.50" font-family="'Liberation Mono', sans-serif" font-size="7" font-weight="bold" fill="#f4f4f4" text-anchor="start" textLength="7.1" lengthAdjust="spacingAndGlyphs">D5</text>
<text x="429.60" y="386.90" font-family="'Liberation Mono', sans-serif" font-size="7" font-weight="bold" fill="#f4f4f4" text-anchor="start" textLength="7.1" lengthAdjust="spacingAndGlyphs">D6</text>
<text x="429.60" y="395.30" font-family="'Liberation Mono', sans-serif" font-size="7" font-weight="bold" fill="#f4f4f4" text-anchor="start" textLength="7.1" lengthAdjust="spacingAndGlyphs">D7</text>
<text x="429.60" y="403.70" font-family="'Liberation Mono', sans-serif" font-size="7" font-weight="bold" fill="#f4f4f4" text-anchor="start" textLength="7.1" lengthAdjust="spacingAndGlyphs">Φ2</text>
<text x="426.05" y="412.10" font-family="'Liberation Mono', sans-serif" font-size="7" font-weight="bold" fill="#f4f4f4" text-anchor="start" textLength="10.65" lengthAdjust="spacingAndGlyphs">CS1</text>
<text x="426.05" y="420.50" font-family="'Liberation Mono', sans-serif" font-size="7" font-weight="bold" fill="#f4f4f4" text-anchor="start" textLength="10.65" lengthAdjust="spacingAndGlyphs">CS2</text>
<line x1="426.05" y1="414.60" x2="436.70" y2="414.60" stroke="#f4f4f4" stroke-width="0.8"/>
<text x="422.50" y="428.90" font-family="'Liberation Mono', sans-serif" font-size="7" font-weight="bold" fill="#f4f4f4" text-anchor="start" textLength="14.2" lengthAdjust="spacingAndGlyphs">R/!W</text>
<text x="426.05" y="437.30" font-family="'Liberation Mono', sans-serif" font-size="7" font-weight="bold" fill="#f4f4f4" text-anchor="start" textLength="10.65" lengthAdjust="spacingAndGlyphs">IRQ</text>
<text transform="translate(414.50,353.50) rotate(-90)" font-family="'Liberation Mono', monospace" font-size="4.6" fill="#9098a8" text-anchor="middle" letter-spacing="0.8">6522</text>
<path d="M408.40,266.50 A4.6,4.6 0 0 0 417.60,266.50" fill="#20263c" stroke="#b4a06e" stroke-width="0.9"/>
<circle cx="413.0" cy="268.00" r="2" fill="#f0f000"/>
<text x="412.20" y="457.60" font-family="'Liberation Sans', sans-serif" font-size="10.4" font-weight="normal" fill="#33337c" text-anchor="middle">6522-VIA 0x6000</text>
<line x1="450.60" y1="401.20" x2="455.20" y2="401.20" stroke="#000" stroke-width="2.6"/>
<polygon points="455.20,401.20 459.20,396.90 472.40,396.90 472.40,405.50 459.20,405.50" fill="#fff" stroke="#000" stroke-width="1.5" stroke-linejoin="miter"/>
<text x="460.30" y="403.50" font-family="'Liberation Mono', sans-serif" font-size="6.8" font-weight="normal" fill="#2a2a2a" text-anchor="start" textLength="7.0" lengthAdjust="spacingAndGlyphs">p2</text>
<line x1="450.60" y1="426.40" x2="455.20" y2="426.40" stroke="#000" stroke-width="2.6"/>
<polygon points="455.20,426.40 459.20,422.10 472.40,422.10 472.40,430.70 459.20,430.70" fill="#fff" stroke="#000" stroke-width="1.5" stroke-linejoin="miter"/>
<text x="460.30" y="428.70" font-family="'Liberation Mono', sans-serif" font-size="6.8" font-weight="normal" fill="#2a2a2a" text-anchor="start" textLength="7.0" lengthAdjust="spacingAndGlyphs">RW</text>
<line x1="530.60" y1="275.20" x2="521.80" y2="275.20" stroke="#5a87aa" stroke-width="2.9" stroke-linecap="round"/>
<line x1="530.60" y1="283.60" x2="522.20" y2="283.60" stroke="#fa8200" stroke-width="3.1"/>
<polygon points="525.80,283.60 522.20,280.80 521.40,283.60 522.20,286.40" fill="#fa8200"/>
<line x1="530.60" y1="292.00" x2="522.20" y2="292.00" stroke="#0000c8" stroke-width="3.1"/>
<polygon points="520.60,292.00 525.40,289.30 525.40,294.70" fill="#0000c8"/>
<line x1="530.60" y1="300.40" x2="522.20" y2="300.40" stroke="#fa8200" stroke-width="3.1"/>
<polygon points="525.80,300.40 522.20,297.60 521.40,300.40 522.20,303.20" fill="#fa8200"/>
<line x1="530.60" y1="308.80" x2="521.80" y2="308.80" stroke="#5a87aa" stroke-width="2.9" stroke-linecap="round"/>
<line x1="530.60" y1="317.20" x2="522.20" y2="317.20" stroke="#fa8200" stroke-width="3.1"/>
<polygon points="525.80,317.20 522.20,314.40 521.40,317.20 522.20,320.00" fill="#fa8200"/>
<line x1="530.60" y1="325.60" x2="522.20" y2="325.60" stroke="#0000c8" stroke-width="3.1"/>
<polygon points="520.60,325.60 525.40,322.90 525.40,328.30" fill="#0000c8"/>
<line x1="530.60" y1="334.00" x2="521.80" y2="334.00" stroke="#5a87aa" stroke-width="2.9" stroke-linecap="round"/>
<line x1="530.60" y1="342.40" x2="522.20" y2="342.40" stroke="#0000c8" stroke-width="3.1"/>
<polygon points="520.60,342.40 525.40,339.70 525.40,345.10" fill="#0000c8"/>
<line x1="530.60" y1="350.80" x2="522.20" y2="350.80" stroke="#0000c8" stroke-width="3.1"/>
<polygon points="520.60,350.80 525.40,348.10 525.40,353.50" fill="#0000c8"/>
<line x1="530.60" y1="359.20" x2="522.20" y2="359.20" stroke="#0000c8" stroke-width="3.1"/>
<polygon points="520.60,359.20 525.40,356.50 525.40,361.90" fill="#0000c8"/>
<line x1="530.60" y1="367.60" x2="522.20" y2="367.60" stroke="#0000c8" stroke-width="3.1"/>
<polygon points="520.60,367.60 525.40,364.90 525.40,370.30" fill="#0000c8"/>
<line x1="530.60" y1="376.00" x2="522.20" y2="376.00" stroke="#c80000" stroke-width="3.1"/>
<polygon points="520.60,376.00 525.40,373.30 525.40,378.70" fill="#c80000"/>
<line x1="530.60" y1="384.40" x2="522.20" y2="384.40" stroke="#c80000" stroke-width="3.1"/>
<polygon points="520.60,384.40 525.40,381.70 525.40,387.10" fill="#c80000"/>
<line x1="530.60" y1="392.80" x2="522.20" y2="392.80" stroke="#0000c8" stroke-width="3.1"/>
<polygon points="520.60,392.80 525.40,390.10 525.40,395.50" fill="#0000c8"/>
<line x1="530.60" y1="401.20" x2="522.20" y2="401.20" stroke="#0000c8" stroke-width="3.1"/>
<polygon points="520.60,401.20 525.40,398.50 525.40,403.90" fill="#0000c8"/>
<line x1="530.60" y1="409.60" x2="522.20" y2="409.60" stroke="#0000c8" stroke-width="3.1"/>
<polygon points="520.60,409.60 525.40,406.90 525.40,412.30" fill="#0000c8"/>
<line x1="530.60" y1="418.00" x2="522.20" y2="418.00" stroke="#0000c8" stroke-width="3.1"/>
<polygon points="520.60,418.00 525.40,415.30 525.40,420.70" fill="#0000c8"/>
<line x1="530.60" y1="426.40" x2="522.20" y2="426.40" stroke="#0000c8" stroke-width="3.1"/>
<polygon points="520.60,426.40 525.40,423.70 525.40,429.10" fill="#0000c8"/>
<line x1="530.60" y1="434.80" x2="522.20" y2="434.80" stroke="#0000c8" stroke-width="3.1"/>
<polygon points="520.60,434.80 525.40,432.10 525.40,437.50" fill="#0000c8"/>
<line x1="581.00" y1="275.20" x2="589.40" y2="275.20" stroke="#fa8200" stroke-width="3.1"/>
<polygon points="585.80,275.20 589.40,278.00 590.20,275.20 589.40,272.40" fill="#fa8200"/>
<line x1="581.00" y1="283.60" x2="589.40" y2="283.60" stroke="#0000c8" stroke-width="3.1"/>
<polygon points="591.00,283.60 586.20,286.30 586.20,280.90" fill="#0000c8"/>
<line x1="581.00" y1="292.00" x2="589.40" y2="292.00" stroke="#fa8200" stroke-width="3.1"/>
<polygon points="585.80,292.00 589.40,294.80 590.20,292.00 589.40,289.20" fill="#fa8200"/>
<line x1="581.00" y1="300.40" x2="589.40" y2="300.40" stroke="#6464f5" stroke-width="3.1"/>
<polygon points="585.80,300.40 589.40,303.20 590.20,300.40 589.40,297.60" fill="#6464f5"/>
<line x1="581.00" y1="308.80" x2="589.80" y2="308.80" stroke="#5a87aa" stroke-width="2.9" stroke-linecap="round"/>
<line x1="581.00" y1="317.20" x2="589.80" y2="317.20" stroke="#5a87aa" stroke-width="2.9" stroke-linecap="round"/>
<line x1="581.00" y1="325.60" x2="589.40" y2="325.60" stroke="#c80000" stroke-width="3.1"/>
<polygon points="591.00,325.60 586.20,328.30 586.20,322.90" fill="#c80000"/>
<line x1="581.00" y1="334.00" x2="589.40" y2="334.00" stroke="#fa8200" stroke-width="3.1"/>
<polygon points="585.80,334.00 589.40,336.80 590.20,334.00 589.40,331.20" fill="#fa8200"/>
<line x1="581.00" y1="342.40" x2="589.40" y2="342.40" stroke="#fa8200" stroke-width="3.1"/>
<polygon points="585.80,342.40 589.40,345.20 590.20,342.40 589.40,339.60" fill="#fa8200"/>
<line x1="581.00" y1="350.80" x2="589.40" y2="350.80" stroke="#fa8200" stroke-width="3.1"/>
<polygon points="585.80,350.80 589.40,353.60 590.20,350.80 589.40,348.00" fill="#fa8200"/>
<line x1="581.00" y1="359.20" x2="589.40" y2="359.20" stroke="#fa8200" stroke-width="3.1"/>
<polygon points="585.80,359.20 589.40,362.00 590.20,359.20 589.40,356.40" fill="#fa8200"/>
<line x1="581.00" y1="367.60" x2="589.40" y2="367.60" stroke="#6464f5" stroke-width="3.1"/>
<polygon points="585.80,367.60 589.40,370.40 590.20,367.60 589.40,364.80" fill="#6464f5"/>
<line x1="581.00" y1="376.00" x2="589.40" y2="376.00" stroke="#fa8200" stroke-width="3.1"/>
<polygon points="585.80,376.00 589.40,378.80 590.20,376.00 589.40,373.20" fill="#fa8200"/>
<line x1="581.00" y1="384.40" x2="589.40" y2="384.40" stroke="#6464f5" stroke-width="3.1"/>
<polygon points="585.80,384.40 589.40,387.20 590.20,384.40 589.40,381.60" fill="#6464f5"/>
<line x1="581.00" y1="392.80" x2="589.40" y2="392.80" stroke="#6464f5" stroke-width="3.1"/>
<polygon points="585.80,392.80 589.40,395.60 590.20,392.80 589.40,390.00" fill="#6464f5"/>
<line x1="581.00" y1="401.20" x2="589.40" y2="401.20" stroke="#c80000" stroke-width="3.1"/>
<polygon points="591.00,401.20 586.20,403.90 586.20,398.50" fill="#c80000"/>
<line x1="581.00" y1="409.60" x2="589.40" y2="409.60" stroke="#0000c8" stroke-width="3.1"/>
<polygon points="591.00,409.60 586.20,412.30 586.20,406.90" fill="#0000c8"/>
<line x1="581.00" y1="418.00" x2="589.40" y2="418.00" stroke="#0000c8" stroke-width="3.1"/>
<polygon points="591.00,418.00 586.20,420.70 586.20,415.30" fill="#0000c8"/>
<line x1="581.00" y1="426.40" x2="589.40" y2="426.40" stroke="#0000c8" stroke-width="3.1"/>
<polygon points="591.00,426.40 586.20,429.10 586.20,423.70" fill="#0000c8"/>
<line x1="581.00" y1="434.80" x2="589.80" y2="434.80" stroke="#5a87aa" stroke-width="2.9" stroke-linecap="round"/>
<rect x="530.20" y="266.50" width="51.40" height="177.30" rx="1.2" fill="#141e3c"/>
<text x="532.70" y="277.70" font-family="'Liberation Mono', sans-serif" font-size="7" font-weight="bold" fill="#f4f4f4" text-anchor="start" textLength="10.65" lengthAdjust="spacingAndGlyphs">Vss</text>
<text x="532.70" y="286.10" font-family="'Liberation Mono', sans-serif" font-size="7" font-weight="bold" fill="#f4f4f4" text-anchor="start" textLength="10.65" lengthAdjust="spacingAndGlyphs">RDY</text>
<text x="532.70" y="294.50" font-family="'Liberation Mono', sans-serif" font-size="7" font-weight="bold" fill="#f4f4f4" text-anchor="start" textLength="7.1" lengthAdjust="spacingAndGlyphs">Φ1</text>
<text x="532.70" y="302.90" font-family="'Liberation Mono', sans-serif" font-size="7" font-weight="bold" fill="#f4f4f4" text-anchor="start" textLength="10.65" lengthAdjust="spacingAndGlyphs">IRQ</text>
<line x1="532.70" y1="297.00" x2="543.35" y2="297.00" stroke="#f4f4f4" stroke-width="0.8"/>
<text x="532.70" y="311.30" font-family="'Liberation Mono', sans-serif" font-size="7" font-weight="bold" fill="#f4f4f4" text-anchor="start" textLength="7.1" lengthAdjust="spacingAndGlyphs">NC</text>
<text x="532.70" y="319.70" font-family="'Liberation Mono', sans-serif" font-size="7" font-weight="bold" fill="#f4f4f4" text-anchor="start" textLength="10.65" lengthAdjust="spacingAndGlyphs">NMI</text>
<line x1="532.70" y1="313.80" x2="543.35" y2="313.80" stroke="#f4f4f4" stroke-width="0.8"/>
<text x="532.70" y="328.10" font-family="'Liberation Mono', sans-serif" font-size="7" font-weight="bold" fill="#f4f4f4" text-anchor="start" textLength="14.2" lengthAdjust="spacingAndGlyphs">SYNC</text>
<text x="532.70" y="336.50" font-family="'Liberation Mono', sans-serif" font-size="7" font-weight="bold" fill="#f4f4f4" text-anchor="start" textLength="10.65" lengthAdjust="spacingAndGlyphs">Vcc</text>
<text x="532.70" y="344.90" font-family="'Liberation Mono', sans-serif" font-size="7" font-weight="bold" fill="#f4f4f4" text-anchor="start" textLength="7.1" lengthAdjust="spacingAndGlyphs">A0</text>
<text x="532.70" y="353.30" font-family="'Liberation Mono', sans-serif" font-size="7" font-weight="bold" fill="#f4f4f4" text-anchor="start" textLength="7.1" lengthAdjust="spacingAndGlyphs">A1</text>
<text x="532.70" y="361.70" font-family="'Liberation Mono', sans-serif" font-size="7" font-weight="bold" fill="#f4f4f4" text-anchor="start" textLength="7.1" lengthAdjust="spacingAndGlyphs">A2</text>
<text x="532.70" y="370.10" font-family="'Liberation Mono', sans-serif" font-size="7" font-weight="bold" fill="#f4f4f4" text-anchor="start" textLength="7.1" lengthAdjust="spacingAndGlyphs">A3</text>
<text x="532.70" y="378.50" font-family="'Liberation Mono', sans-serif" font-size="7" font-weight="bold" fill="#f4f4f4" text-anchor="start" textLength="7.1" lengthAdjust="spacingAndGlyphs">A4</text>
<text x="532.70" y="386.90" font-family="'Liberation Mono', sans-serif" font-size="7" font-weight="bold" fill="#f4f4f4" text-anchor="start" textLength="7.1" lengthAdjust="spacingAndGlyphs">A5</text>
<text x="532.70" y="395.30" font-family="'Liberation Mono', sans-serif" font-size="7" font-weight="bold" fill="#f4f4f4" text-anchor="start" textLength="7.1" lengthAdjust="spacingAndGlyphs">A6</text>
<text x="532.70" y="403.70" font-family="'Liberation Mono', sans-serif" font-size="7" font-weight="bold" fill="#f4f4f4" text-anchor="start" textLength="7.1" lengthAdjust="spacingAndGlyphs">A7</text>
<text x="532.70" y="412.10" font-family="'Liberation Mono', sans-serif" font-size="7" font-weight="bold" fill="#f4f4f4" text-anchor="start" textLength="7.1" lengthAdjust="spacingAndGlyphs">A8</text>
<text x="532.70" y="420.50" font-family="'Liberation Mono', sans-serif" font-size="7" font-weight="bold" fill="#f4f4f4" text-anchor="start" textLength="7.1" lengthAdjust="spacingAndGlyphs">A9</text>
<text x="532.70" y="428.90" font-family="'Liberation Mono', sans-serif" font-size="7" font-weight="bold" fill="#f4f4f4" text-anchor="start" textLength="10.65" lengthAdjust="spacingAndGlyphs">A10</text>
<text x="532.70" y="437.30" font-family="'Liberation Mono', sans-serif" font-size="7" font-weight="bold" fill="#f4f4f4" text-anchor="start" textLength="10.65" lengthAdjust="spacingAndGlyphs">A11</text>
<text x="568.85" y="277.70" font-family="'Liberation Mono', sans-serif" font-size="7" font-weight="bold" fill="#f4f4f4" text-anchor="start" textLength="10.65" lengthAdjust="spacingAndGlyphs">Rst</text>
<text x="572.40" y="286.10" font-family="'Liberation Mono', sans-serif" font-size="7" font-weight="bold" fill="#f4f4f4" text-anchor="start" textLength="7.1" lengthAdjust="spacingAndGlyphs">Φ2</text>
<text x="572.40" y="294.50" font-family="'Liberation Mono', sans-serif" font-size="7" font-weight="bold" fill="#f4f4f4" text-anchor="start" textLength="7.1" lengthAdjust="spacingAndGlyphs">SO</text>
<text x="572.40" y="302.90" font-family="'Liberation Mono', sans-serif" font-size="7" font-weight="bold" fill="#f4f4f4" text-anchor="start" textLength="7.1" lengthAdjust="spacingAndGlyphs">Φ0</text>
<text x="572.40" y="311.30" font-family="'Liberation Mono', sans-serif" font-size="7" font-weight="bold" fill="#f4f4f4" text-anchor="start" textLength="7.1" lengthAdjust="spacingAndGlyphs">NC</text>
<text x="572.40" y="319.70" font-family="'Liberation Mono', sans-serif" font-size="7" font-weight="bold" fill="#f4f4f4" text-anchor="start" textLength="7.1" lengthAdjust="spacingAndGlyphs">NC</text>
<text x="565.30" y="328.10" font-family="'Liberation Mono', sans-serif" font-size="7" font-weight="bold" fill="#f4f4f4" text-anchor="start" textLength="14.2" lengthAdjust="spacingAndGlyphs">R/!W</text>
<text x="572.40" y="336.50" font-family="'Liberation Mono', sans-serif" font-size="7" font-weight="bold" fill="#f4f4f4" text-anchor="start" textLength="7.1" lengthAdjust="spacingAndGlyphs">D0</text>
<text x="572.40" y="344.90" font-family="'Liberation Mono', sans-serif" font-size="7" font-weight="bold" fill="#f4f4f4" text-anchor="start" textLength="7.1" lengthAdjust="spacingAndGlyphs">D1</text>
<text x="572.40" y="353.30" font-family="'Liberation Mono', sans-serif" font-size="7" font-weight="bold" fill="#f4f4f4" text-anchor="start" textLength="7.1" lengthAdjust="spacingAndGlyphs">D2</text>
<text x="572.40" y="361.70" font-family="'Liberation Mono', sans-serif" font-size="7" font-weight="bold" fill="#f4f4f4" text-anchor="start" textLength="7.1" lengthAdjust="spacingAndGlyphs">D3</text>
<text x="572.40" y="370.10" font-family="'Liberation Mono', sans-serif" font-size="7" font-weight="bold" fill="#f4f4f4" text-anchor="start" textLength="7.1" lengthAdjust="spacingAndGlyphs">D4</text>
<text x="572.40" y="378.50" font-family="'Liberation Mono', sans-serif" font-size="7" font-weight="bold" fill="#f4f4f4" text-anchor="start" textLength="7.1" lengthAdjust="spacingAndGlyphs">D5</text>
<text x="572.40" y="386.90" font-family="'Liberation Mono', sans-serif" font-size="7" font-weight="bold" fill="#f4f4f4" text-anchor="start" textLength="7.1" lengthAdjust="spacingAndGlyphs">D6</text>
<text x="572.40" y="395.30" font-family="'Liberation Mono', sans-serif" font-size="7" font-weight="bold" fill="#f4f4f4" text-anchor="start" textLength="7.1" lengthAdjust="spacingAndGlyphs">D7</text>
<text x="568.85" y="403.70" font-family="'Liberation Mono', sans-serif" font-size="7" font-weight="bold" fill="#f4f4f4" text-anchor="start" textLength="10.65" lengthAdjust="spacingAndGlyphs">A15</text>
<text x="568.85" y="412.10" font-family="'Liberation Mono', sans-serif" font-size="7" font-weight="bold" fill="#f4f4f4" text-anchor="start" textLength="10.65" lengthAdjust="spacingAndGlyphs">A14</text>
<text x="568.85" y="420.50" font-family="'Liberation Mono', sans-serif" font-size="7" font-weight="bold" fill="#f4f4f4" text-anchor="start" textLength="10.65" lengthAdjust="spacingAndGlyphs">A13</text>
<text x="568.85" y="428.90" font-family="'Liberation Mono', sans-serif" font-size="7" font-weight="bold" fill="#f4f4f4" text-anchor="start" textLength="10.65" lengthAdjust="spacingAndGlyphs">A12</text>
<text x="568.85" y="437.30" font-family="'Liberation Mono', sans-serif" font-size="7" font-weight="bold" fill="#f4f4f4" text-anchor="start" textLength="10.65" lengthAdjust="spacingAndGlyphs">Vss</text>
<text transform="translate(557.30,352.50) rotate(-90)" font-family="'Liberation Mono', monospace" font-size="4.6" fill="#9098a8" text-anchor="middle" letter-spacing="0.8">6502</text>
<path d="M551.60,266.50 A4.2,4.2 0 0 0 560.00,266.50" fill="#20263c" stroke="#8c94a8" stroke-width="0.9"/>
<text x="552.60" y="263.40" font-family="'Liberation Sans', sans-serif" font-size="10.6" font-weight="normal" fill="#33337c" text-anchor="middle">6502-1</text>
<polyline points="589.4,283.6 597.8,283.6" fill="none" stroke="#3e3ec6" stroke-width="1.75" stroke-linejoin="miter"/>
<polyline points="589.4,292.0 597.8,292.0" fill="none" stroke="#c4483a" stroke-width="1.75" stroke-linejoin="miter"/>
<polyline points="589.4,325.6 597.8,325.6" fill="none" stroke="#c4483a" stroke-width="1.75" stroke-linejoin="miter"/>
<line x1="597.80" y1="283.60" x2="602.40" y2="283.60" stroke="#000" stroke-width="2.6"/>
<polygon points="602.40,283.60 606.40,279.30 619.60,279.30 619.60,287.90 606.40,287.90" fill="#fff" stroke="#000" stroke-width="1.5" stroke-linejoin="miter"/>
<text x="607.50" y="285.90" font-family="'Liberation Mono', sans-serif" font-size="6.8" font-weight="normal" fill="#2a2a2a" text-anchor="start" textLength="7.0" lengthAdjust="spacingAndGlyphs">p2</text>
<line x1="597.80" y1="292.00" x2="602.40" y2="292.00" stroke="#000" stroke-width="2.6"/>
<polygon points="602.40,292.00 606.40,287.70 619.60,287.70 619.60,296.30 606.40,296.30" fill="#fff" stroke="#000" stroke-width="1.5" stroke-linejoin="miter"/>
<text x="607.50" y="294.30" font-family="'Liberation Mono', sans-serif" font-size="6.8" font-weight="normal" fill="#2a2a2a" text-anchor="start" textLength="7.0" lengthAdjust="spacingAndGlyphs">5V</text>
<line x1="597.80" y1="325.60" x2="602.40" y2="325.60" stroke="#000" stroke-width="2.6"/>
<polygon points="602.40,325.60 606.40,321.30 619.60,321.30 619.60,329.90 606.40,329.90" fill="#fff" stroke="#000" stroke-width="1.5" stroke-linejoin="miter"/>
<text x="607.50" y="327.90" font-family="'Liberation Mono', sans-serif" font-size="6.8" font-weight="normal" fill="#2a2a2a" text-anchor="start" textLength="7.0" lengthAdjust="spacingAndGlyphs">RW</text>
<line x1="509.6" y1="279.40" x2="509.6" y2="274.80" stroke="#000" stroke-width="2.6"/>
<polygon points="509.6,274.80 505.30,270.80 505.30,258.00 513.90,258.00 513.90,270.80" fill="#fff" stroke="#000" stroke-width="1.5"/>
<text transform="translate(511.80,268.00) rotate(-90)" font-family="'Liberation Mono', monospace" font-size="6.4" fill="#333" textLength="7" lengthAdjust="spacingAndGlyphs">5V</text>
<line x1="681.80" y1="266.80" x2="673.40" y2="266.80" stroke="#6464f5" stroke-width="3.1"/>
<polygon points="677.00,266.80 673.40,264.00 672.60,266.80 673.40,269.60" fill="#6464f5"/>
<line x1="681.80" y1="275.20" x2="673.40" y2="275.20" stroke="#6464f5" stroke-width="3.1"/>
<polygon points="677.00,275.20 673.40,272.40 672.60,275.20 673.40,278.00" fill="#6464f5"/>
<line x1="681.80" y1="283.60" x2="673.40" y2="283.60" stroke="#6464f5" stroke-width="3.1"/>
<polygon points="677.00,283.60 673.40,280.80 672.60,283.60 673.40,286.40" fill="#6464f5"/>
<line x1="681.80" y1="292.00" x2="673.40" y2="292.00" stroke="#6464f5" stroke-width="3.1"/>
<polygon points="677.00,292.00 673.40,289.20 672.60,292.00 673.40,294.80" fill="#6464f5"/>
<line x1="681.80" y1="300.40" x2="673.40" y2="300.40" stroke="#fa8200" stroke-width="3.1"/>
<polygon points="677.00,300.40 673.40,297.60 672.60,300.40 673.40,303.20" fill="#fa8200"/>
<line x1="681.80" y1="308.80" x2="673.40" y2="308.80" stroke="#fa8200" stroke-width="3.1"/>
<polygon points="677.00,308.80 673.40,306.00 672.60,308.80 673.40,311.60" fill="#fa8200"/>
<line x1="681.80" y1="317.20" x2="673.40" y2="317.20" stroke="#6464f5" stroke-width="3.1"/>
<polygon points="677.00,317.20 673.40,314.40 672.60,317.20 673.40,320.00" fill="#6464f5"/>
<line x1="681.80" y1="325.60" x2="673.40" y2="325.60" stroke="#6464f5" stroke-width="3.1"/>
<polygon points="677.00,325.60 673.40,322.80 672.60,325.60 673.40,328.40" fill="#6464f5"/>
<line x1="681.80" y1="334.00" x2="673.40" y2="334.00" stroke="#6464f5" stroke-width="3.1"/>
<polygon points="677.00,334.00 673.40,331.20 672.60,334.00 673.40,336.80" fill="#6464f5"/>
<line x1="681.80" y1="342.40" x2="673.40" y2="342.40" stroke="#6464f5" stroke-width="3.1"/>
<polygon points="677.00,342.40 673.40,339.60 672.60,342.40 673.40,345.20" fill="#6464f5"/>
<line x1="681.80" y1="350.80" x2="673.40" y2="350.80" stroke="#6464f5" stroke-width="3.1"/>
<polygon points="677.00,350.80 673.40,348.00 672.60,350.80 673.40,353.60" fill="#6464f5"/>
<line x1="681.80" y1="359.20" x2="673.40" y2="359.20" stroke="#6464f5" stroke-width="3.1"/>
<polygon points="677.00,359.20 673.40,356.40 672.60,359.20 673.40,362.00" fill="#6464f5"/>
<line x1="681.80" y1="367.60" x2="673.40" y2="367.60" stroke="#6464f5" stroke-width="3.1"/>
<polygon points="677.00,367.60 673.40,364.80 672.60,367.60 673.40,370.40" fill="#6464f5"/>
<line x1="681.80" y1="376.00" x2="673.40" y2="376.00" stroke="#6464f5" stroke-width="3.1"/>
<polygon points="677.00,376.00 673.40,373.20 672.60,376.00 673.40,378.80" fill="#6464f5"/>
<line x1="681.80" y1="384.40" x2="673.40" y2="384.40" stroke="#6464f5" stroke-width="3.1"/>
<polygon points="677.00,384.40 673.40,381.60 672.60,384.40 673.40,387.20" fill="#6464f5"/>
<line x1="677.20" y1="392.80" x2="673.40" y2="392.80" stroke="#fa8200" stroke-width="3.1"/>
<polygon points="677.00,392.80 673.40,390.00 672.60,392.80 673.40,395.60" fill="#fa8200"/>
<circle cx="679.20" cy="392.80" r="2.1" fill="#fff" stroke="#fa8200" stroke-width="1.3"/>
<line x1="677.20" y1="401.20" x2="673.40" y2="401.20" stroke="#6464f5" stroke-width="3.1"/>
<polygon points="677.00,401.20 673.40,398.40 672.60,401.20 673.40,404.00" fill="#6464f5"/>
<circle cx="679.20" cy="401.20" r="2.1" fill="#fff" stroke="#6464f5" stroke-width="1.3"/>
<line x1="715.40" y1="266.80" x2="723.80" y2="266.80" stroke="#c80000" stroke-width="3.1"/>
<polygon points="725.40,266.80 720.60,269.50 720.60,264.10" fill="#c80000"/>
<line x1="715.40" y1="275.20" x2="723.80" y2="275.20" stroke="#c80000" stroke-width="3.1"/>
<polygon points="725.40,275.20 720.60,277.90 720.60,272.50" fill="#c80000"/>
<line x1="715.40" y1="283.60" x2="723.80" y2="283.60" stroke="#c80000" stroke-width="3.1"/>
<polygon points="725.40,283.60 720.60,286.30 720.60,280.90" fill="#c80000"/>
<line x1="715.40" y1="292.00" x2="723.80" y2="292.00" stroke="#c80000" stroke-width="3.1"/>
<polygon points="725.40,292.00 720.60,294.70 720.60,289.30" fill="#c80000"/>
<line x1="715.40" y1="300.40" x2="723.80" y2="300.40" stroke="#0000c8" stroke-width="3.1"/>
<polygon points="725.40,300.40 720.60,303.10 720.60,297.70" fill="#0000c8"/>
<line x1="715.40" y1="308.80" x2="723.80" y2="308.80" stroke="#c80000" stroke-width="3.1"/>
<polygon points="725.40,308.80 720.60,311.50 720.60,306.10" fill="#c80000"/>
<line x1="715.40" y1="317.20" x2="723.80" y2="317.20" stroke="#0000c8" stroke-width="3.1"/>
<polygon points="725.40,317.20 720.60,319.90 720.60,314.50" fill="#0000c8"/>
<line x1="715.40" y1="325.60" x2="723.80" y2="325.60" stroke="#0000c8" stroke-width="3.1"/>
<polygon points="725.40,325.60 720.60,328.30 720.60,322.90" fill="#0000c8"/>
<line x1="720.00" y1="401.20" x2="723.80" y2="401.20" stroke="#6464f5" stroke-width="3.1"/>
<polygon points="720.20,401.20 723.80,404.00 724.60,401.20 723.80,398.40" fill="#6464f5"/>
<circle cx="718.00" cy="401.20" r="2.1" fill="#fff" stroke="#6464f5" stroke-width="1.3"/>
<rect x="681.80" y="258.40" width="33.60" height="151.20" fill="#fff" stroke="#000" stroke-width="1.4"/>
<text x="683.90" y="269.30" font-family="'Liberation Mono', sans-serif" font-size="7" font-weight="normal" fill="#222238" text-anchor="start" textLength="7.1" lengthAdjust="spacingAndGlyphs">A0</text>
<text x="683.90" y="277.70" font-family="'Liberation Mono', sans-serif" font-size="7" font-weight="normal" fill="#222238" text-anchor="start" textLength="7.1" lengthAdjust="spacingAndGlyphs">A1</text>
<text x="683.90" y="286.10" font-family="'Liberation Mono', sans-serif" font-size="7" font-weight="normal" fill="#222238" text-anchor="start" textLength="7.1" lengthAdjust="spacingAndGlyphs">A2</text>
<text x="683.90" y="294.50" font-family="'Liberation Mono', sans-serif" font-size="7" font-weight="normal" fill="#222238" text-anchor="start" textLength="7.1" lengthAdjust="spacingAndGlyphs">A3</text>
<text x="683.90" y="302.90" font-family="'Liberation Mono', sans-serif" font-size="7" font-weight="normal" fill="#222238" text-anchor="start" textLength="7.1" lengthAdjust="spacingAndGlyphs">A4</text>
<text x="683.90" y="311.30" font-family="'Liberation Mono', sans-serif" font-size="7" font-weight="normal" fill="#222238" text-anchor="start" textLength="7.1" lengthAdjust="spacingAndGlyphs">A5</text>
<text x="683.90" y="319.70" font-family="'Liberation Mono', sans-serif" font-size="7" font-weight="normal" fill="#222238" text-anchor="start" textLength="7.1" lengthAdjust="spacingAndGlyphs">A6</text>
<text x="683.90" y="328.10" font-family="'Liberation Mono', sans-serif" font-size="7" font-weight="normal" fill="#222238" text-anchor="start" textLength="7.1" lengthAdjust="spacingAndGlyphs">A7</text>
<text x="683.90" y="336.50" font-family="'Liberation Mono', sans-serif" font-size="7" font-weight="normal" fill="#222238" text-anchor="start" textLength="7.1" lengthAdjust="spacingAndGlyphs">A8</text>
<text x="683.90" y="344.90" font-family="'Liberation Mono', sans-serif" font-size="7" font-weight="normal" fill="#222238" text-anchor="start" textLength="7.1" lengthAdjust="spacingAndGlyphs">A9</text>
<text x="683.90" y="353.30" font-family="'Liberation Mono', sans-serif" font-size="7" font-weight="normal" fill="#222238" text-anchor="start" textLength="10.65" lengthAdjust="spacingAndGlyphs">A10</text>
<text x="683.90" y="361.70" font-family="'Liberation Mono', sans-serif" font-size="7" font-weight="normal" fill="#222238" text-anchor="start" textLength="10.65" lengthAdjust="spacingAndGlyphs">A11</text>
<text x="683.90" y="370.10" font-family="'Liberation Mono', sans-serif" font-size="7" font-weight="normal" fill="#222238" text-anchor="start" textLength="10.65" lengthAdjust="spacingAndGlyphs">A12</text>
<text x="683.90" y="378.50" font-family="'Liberation Mono', sans-serif" font-size="7" font-weight="normal" fill="#222238" text-anchor="start" textLength="10.65" lengthAdjust="spacingAndGlyphs">A13</text>
<text x="683.90" y="386.90" font-family="'Liberation Mono', sans-serif" font-size="7" font-weight="normal" fill="#222238" text-anchor="start" textLength="10.65" lengthAdjust="spacingAndGlyphs">A14</text>
<text x="683.90" y="395.30" font-family="'Liberation Mono', sans-serif" font-size="7" font-weight="normal" fill="#222238" text-anchor="start" textLength="7.1" lengthAdjust="spacingAndGlyphs">WE</text>
<text x="683.90" y="403.70" font-family="'Liberation Mono', sans-serif" font-size="7" font-weight="normal" fill="#222238" text-anchor="start" textLength="7.1" lengthAdjust="spacingAndGlyphs">OE</text>
<text x="706.00" y="269.30" font-family="'Liberation Mono', sans-serif" font-size="7" font-weight="normal" fill="#222238" text-anchor="start" textLength="7.1" lengthAdjust="spacingAndGlyphs">D0</text>
<text x="706.00" y="277.70" font-family="'Liberation Mono', sans-serif" font-size="7" font-weight="normal" fill="#222238" text-anchor="start" textLength="7.1" lengthAdjust="spacingAndGlyphs">D1</text>
<text x="706.00" y="286.10" font-family="'Liberation Mono', sans-serif" font-size="7" font-weight="normal" fill="#222238" text-anchor="start" textLength="7.1" lengthAdjust="spacingAndGlyphs">D2</text>
<text x="706.00" y="294.50" font-family="'Liberation Mono', sans-serif" font-size="7" font-weight="normal" fill="#222238" text-anchor="start" textLength="7.1" lengthAdjust="spacingAndGlyphs">D3</text>
<text x="706.00" y="302.90" font-family="'Liberation Mono', sans-serif" font-size="7" font-weight="normal" fill="#222238" text-anchor="start" textLength="7.1" lengthAdjust="spacingAndGlyphs">D4</text>
<text x="706.00" y="311.30" font-family="'Liberation Mono', sans-serif" font-size="7" font-weight="normal" fill="#222238" text-anchor="start" textLength="7.1" lengthAdjust="spacingAndGlyphs">D5</text>
<text x="706.00" y="319.70" font-family="'Liberation Mono', sans-serif" font-size="7" font-weight="normal" fill="#222238" text-anchor="start" textLength="7.1" lengthAdjust="spacingAndGlyphs">D6</text>
<text x="706.00" y="328.10" font-family="'Liberation Mono', sans-serif" font-size="7" font-weight="normal" fill="#222238" text-anchor="start" textLength="7.1" lengthAdjust="spacingAndGlyphs">D7</text>
<text x="706.00" y="403.70" font-family="'Liberation Mono', sans-serif" font-size="7" font-weight="normal" fill="#222238" text-anchor="start" textLength="7.1" lengthAdjust="spacingAndGlyphs">CS</text>
<text x="698.60" y="255.20" font-family="'Liberation Sans', sans-serif" font-size="10.4" font-weight="normal" fill="#33337c" text-anchor="middle">ROM 0x8000</text>
<line x1="665.20" y1="392.80" x2="660.60" y2="392.80" stroke="#000" stroke-width="2.6"/>
<polygon points="660.60,392.80 656.60,388.50 643.40,388.50 643.40,397.10 656.60,397.10" fill="#fff" stroke="#000" stroke-width="1.5" stroke-linejoin="miter"/>
<text x="647.70" y="395.10" font-family="'Liberation Mono', sans-serif" font-size="6.8" font-weight="normal" fill="#2a2a2a" text-anchor="start" textLength="7.0" lengthAdjust="spacingAndGlyphs">5V</text>
<line x1="669.80" y1="401.20" x2="665.20" y2="401.20" stroke="#000" stroke-width="2.6"/>
<polygon points="665.20,401.20 661.20,396.90 644.50,396.90 644.50,405.50 661.20,405.50" fill="#fff" stroke="#000" stroke-width="1.5" stroke-linejoin="miter"/>
<text x="648.80" y="403.50" font-family="'Liberation Mono', sans-serif" font-size="6.8" font-weight="normal" fill="#2a2a2a" text-anchor="start" textLength="10.5" lengthAdjust="spacingAndGlyphs">Gnd</text>
<line x1="799.40" y1="266.80" x2="791.00" y2="266.80" stroke="#6464f5" stroke-width="3.1"/>
<polygon points="794.60,266.80 791.00,264.00 790.20,266.80 791.00,269.60" fill="#6464f5"/>
<line x1="799.40" y1="275.20" x2="791.00" y2="275.20" stroke="#6464f5" stroke-width="3.1"/>
<polygon points="794.60,275.20 791.00,272.40 790.20,275.20 791.00,278.00" fill="#6464f5"/>
<line x1="799.40" y1="283.60" x2="791.00" y2="283.60" stroke="#6464f5" stroke-width="3.1"/>
<polygon points="794.60,283.60 791.00,280.80 790.20,283.60 791.00,286.40" fill="#6464f5"/>
<line x1="799.40" y1="292.00" x2="791.00" y2="292.00" stroke="#6464f5" stroke-width="3.1"/>
<polygon points="794.60,292.00 791.00,289.20 790.20,292.00 791.00,294.80" fill="#6464f5"/>
<line x1="799.40" y1="300.40" x2="791.00" y2="300.40" stroke="#fa8200" stroke-width="3.1"/>
<polygon points="794.60,300.40 791.00,297.60 790.20,300.40 791.00,303.20" fill="#fa8200"/>
<line x1="799.40" y1="308.80" x2="791.00" y2="308.80" stroke="#fa8200" stroke-width="3.1"/>
<polygon points="794.60,308.80 791.00,306.00 790.20,308.80 791.00,311.60" fill="#fa8200"/>
<line x1="799.40" y1="317.20" x2="791.00" y2="317.20" stroke="#6464f5" stroke-width="3.1"/>
<polygon points="794.60,317.20 791.00,314.40 790.20,317.20 791.00,320.00" fill="#6464f5"/>
<line x1="799.40" y1="325.60" x2="791.00" y2="325.60" stroke="#6464f5" stroke-width="3.1"/>
<polygon points="794.60,325.60 791.00,322.80 790.20,325.60 791.00,328.40" fill="#6464f5"/>
<line x1="799.40" y1="334.00" x2="791.00" y2="334.00" stroke="#6464f5" stroke-width="3.1"/>
<polygon points="794.60,334.00 791.00,331.20 790.20,334.00 791.00,336.80" fill="#6464f5"/>
<line x1="799.40" y1="342.40" x2="791.00" y2="342.40" stroke="#6464f5" stroke-width="3.1"/>
<polygon points="794.60,342.40 791.00,339.60 790.20,342.40 791.00,345.20" fill="#6464f5"/>
<line x1="799.40" y1="350.80" x2="791.00" y2="350.80" stroke="#6464f5" stroke-width="3.1"/>
<polygon points="794.60,350.80 791.00,348.00 790.20,350.80 791.00,353.60" fill="#6464f5"/>
<line x1="799.40" y1="359.20" x2="791.00" y2="359.20" stroke="#6464f5" stroke-width="3.1"/>
<polygon points="794.60,359.20 791.00,356.40 790.20,359.20 791.00,362.00" fill="#6464f5"/>
<line x1="799.40" y1="367.60" x2="791.00" y2="367.60" stroke="#6464f5" stroke-width="3.1"/>
<polygon points="794.60,367.60 791.00,364.80 790.20,367.60 791.00,370.40" fill="#6464f5"/>
<line x1="799.40" y1="376.00" x2="791.00" y2="376.00" stroke="#6464f5" stroke-width="3.1"/>
<polygon points="794.60,376.00 791.00,373.20 790.20,376.00 791.00,378.80" fill="#6464f5"/>
<line x1="799.40" y1="384.40" x2="791.00" y2="384.40" stroke="#6464f5" stroke-width="3.1"/>
<polygon points="794.60,384.40 791.00,381.60 790.20,384.40 791.00,387.20" fill="#6464f5"/>
<line x1="794.80" y1="392.80" x2="791.00" y2="392.80" stroke="#fa8200" stroke-width="3.1"/>
<polygon points="794.60,392.80 791.00,390.00 790.20,392.80 791.00,395.60" fill="#fa8200"/>
<circle cx="796.80" cy="392.80" r="2.1" fill="#fff" stroke="#fa8200" stroke-width="1.3"/>
<line x1="794.80" y1="401.20" x2="791.00" y2="401.20" stroke="#6464f5" stroke-width="3.1"/>
<polygon points="794.60,401.20 791.00,398.40 790.20,401.20 791.00,404.00" fill="#6464f5"/>
<circle cx="796.80" cy="401.20" r="2.1" fill="#fff" stroke="#6464f5" stroke-width="1.3"/>
<line x1="833.00" y1="266.80" x2="841.40" y2="266.80" stroke="#fa8200" stroke-width="3.1"/>
<polygon points="837.80,266.80 841.40,269.60 842.20,266.80 841.40,264.00" fill="#fa8200"/>
<line x1="833.00" y1="275.20" x2="841.40" y2="275.20" stroke="#fa8200" stroke-width="3.1"/>
<polygon points="837.80,275.20 841.40,278.00 842.20,275.20 841.40,272.40" fill="#fa8200"/>
<line x1="833.00" y1="283.60" x2="841.40" y2="283.60" stroke="#fa8200" stroke-width="3.1"/>
<polygon points="837.80,283.60 841.40,286.40 842.20,283.60 841.40,280.80" fill="#fa8200"/>
<line x1="833.00" y1="292.00" x2="841.40" y2="292.00" stroke="#fa8200" stroke-width="3.1"/>
<polygon points="837.80,292.00 841.40,294.80 842.20,292.00 841.40,289.20" fill="#fa8200"/>
<line x1="833.00" y1="300.40" x2="841.40" y2="300.40" stroke="#6464f5" stroke-width="3.1"/>
<polygon points="837.80,300.40 841.40,303.20 842.20,300.40 841.40,297.60" fill="#6464f5"/>
<line x1="833.00" y1="308.80" x2="841.40" y2="308.80" stroke="#fa8200" stroke-width="3.1"/>
<polygon points="837.80,308.80 841.40,311.60 842.20,308.80 841.40,306.00" fill="#fa8200"/>
<line x1="833.00" y1="317.20" x2="841.40" y2="317.20" stroke="#6464f5" stroke-width="3.1"/>
<polygon points="837.80,317.20 841.40,320.00 842.20,317.20 841.40,314.40" fill="#6464f5"/>
<line x1="833.00" y1="325.60" x2="841.40" y2="325.60" stroke="#6464f5" stroke-width="3.1"/>
<polygon points="837.80,325.60 841.40,328.40 842.20,325.60 841.40,322.80" fill="#6464f5"/>
<line x1="837.60" y1="401.20" x2="841.40" y2="401.20" stroke="#fa8200" stroke-width="3.1"/>
<polygon points="837.80,401.20 841.40,404.00 842.20,401.20 841.40,398.40" fill="#fa8200"/>
<circle cx="835.60" cy="401.20" r="2.1" fill="#fff" stroke="#fa8200" stroke-width="1.3"/>
<rect x="799.40" y="258.40" width="33.60" height="151.20" fill="#fff" stroke="#000" stroke-width="1.4"/>
<text x="801.50" y="269.30" font-family="'Liberation Mono', sans-serif" font-size="7" font-weight="normal" fill="#222238" text-anchor="start" textLength="7.1" lengthAdjust="spacingAndGlyphs">A0</text>
<text x="801.50" y="277.70" font-family="'Liberation Mono', sans-serif" font-size="7" font-weight="normal" fill="#222238" text-anchor="start" textLength="7.1" lengthAdjust="spacingAndGlyphs">A1</text>
<text x="801.50" y="286.10" font-family="'Liberation Mono', sans-serif" font-size="7" font-weight="normal" fill="#222238" text-anchor="start" textLength="7.1" lengthAdjust="spacingAndGlyphs">A2</text>
<text x="801.50" y="294.50" font-family="'Liberation Mono', sans-serif" font-size="7" font-weight="normal" fill="#222238" text-anchor="start" textLength="7.1" lengthAdjust="spacingAndGlyphs">A3</text>
<text x="801.50" y="302.90" font-family="'Liberation Mono', sans-serif" font-size="7" font-weight="normal" fill="#222238" text-anchor="start" textLength="7.1" lengthAdjust="spacingAndGlyphs">A4</text>
<text x="801.50" y="311.30" font-family="'Liberation Mono', sans-serif" font-size="7" font-weight="normal" fill="#222238" text-anchor="start" textLength="7.1" lengthAdjust="spacingAndGlyphs">A5</text>
<text x="801.50" y="319.70" font-family="'Liberation Mono', sans-serif" font-size="7" font-weight="normal" fill="#222238" text-anchor="start" textLength="7.1" lengthAdjust="spacingAndGlyphs">A6</text>
<text x="801.50" y="328.10" font-family="'Liberation Mono', sans-serif" font-size="7" font-weight="normal" fill="#222238" text-anchor="start" textLength="7.1" lengthAdjust="spacingAndGlyphs">A7</text>
<text x="801.50" y="336.50" font-family="'Liberation Mono', sans-serif" font-size="7" font-weight="normal" fill="#222238" text-anchor="start" textLength="7.1" lengthAdjust="spacingAndGlyphs">A8</text>
<text x="801.50" y="344.90" font-family="'Liberation Mono', sans-serif" font-size="7" font-weight="normal" fill="#222238" text-anchor="start" textLength="7.1" lengthAdjust="spacingAndGlyphs">A9</text>
<text x="801.50" y="353.30" font-family="'Liberation Mono', sans-serif" font-size="7" font-weight="normal" fill="#222238" text-anchor="start" textLength="10.65" lengthAdjust="spacingAndGlyphs">A10</text>
<text x="801.50" y="361.70" font-family="'Liberation Mono', sans-serif" font-size="7" font-weight="normal" fill="#222238" text-anchor="start" textLength="10.65" lengthAdjust="spacingAndGlyphs">A11</text>
<text x="801.50" y="370.10" font-family="'Liberation Mono', sans-serif" font-size="7" font-weight="normal" fill="#222238" text-anchor="start" textLength="10.65" lengthAdjust="spacingAndGlyphs">A12</text>
<text x="801.50" y="378.50" font-family="'Liberation Mono', sans-serif" font-size="7" font-weight="normal" fill="#222238" text-anchor="start" textLength="10.65" lengthAdjust="spacingAndGlyphs">A13</text>
<text x="801.50" y="386.90" font-family="'Liberation Mono', sans-serif" font-size="7" font-weight="normal" fill="#222238" text-anchor="start" textLength="10.65" lengthAdjust="spacingAndGlyphs">A14</text>
<text x="801.50" y="395.30" font-family="'Liberation Mono', sans-serif" font-size="7" font-weight="normal" fill="#222238" text-anchor="start" textLength="7.1" lengthAdjust="spacingAndGlyphs">WE</text>
<text x="801.50" y="403.70" font-family="'Liberation Mono', sans-serif" font-size="7" font-weight="normal" fill="#222238" text-anchor="start" textLength="7.1" lengthAdjust="spacingAndGlyphs">OE</text>
<text x="823.60" y="269.30" font-family="'Liberation Mono', sans-serif" font-size="7" font-weight="normal" fill="#222238" text-anchor="start" textLength="7.1" lengthAdjust="spacingAndGlyphs">D0</text>
<text x="823.60" y="277.70" font-family="'Liberation Mono', sans-serif" font-size="7" font-weight="normal" fill="#222238" text-anchor="start" textLength="7.1" lengthAdjust="spacingAndGlyphs">D1</text>
<text x="823.60" y="286.10" font-family="'Liberation Mono', sans-serif" font-size="7" font-weight="normal" fill="#222238" text-anchor="start" textLength="7.1" lengthAdjust="spacingAndGlyphs">D2</text>
<text x="823.60" y="294.50" font-family="'Liberation Mono', sans-serif" font-size="7" font-weight="normal" fill="#222238" text-anchor="start" textLength="7.1" lengthAdjust="spacingAndGlyphs">D3</text>
<text x="823.60" y="302.90" font-family="'Liberation Mono', sans-serif" font-size="7" font-weight="normal" fill="#222238" text-anchor="start" textLength="7.1" lengthAdjust="spacingAndGlyphs">D4</text>
<text x="823.60" y="311.30" font-family="'Liberation Mono', sans-serif" font-size="7" font-weight="normal" fill="#222238" text-anchor="start" textLength="7.1" lengthAdjust="spacingAndGlyphs">D5</text>
<text x="823.60" y="319.70" font-family="'Liberation Mono', sans-serif" font-size="7" font-weight="normal" fill="#222238" text-anchor="start" textLength="7.1" lengthAdjust="spacingAndGlyphs">D6</text>
<text x="823.60" y="328.10" font-family="'Liberation Mono', sans-serif" font-size="7" font-weight="normal" fill="#222238" text-anchor="start" textLength="7.1" lengthAdjust="spacingAndGlyphs">D7</text>
<text x="823.60" y="403.70" font-family="'Liberation Mono', sans-serif" font-size="7" font-weight="normal" fill="#222238" text-anchor="start" textLength="7.1" lengthAdjust="spacingAndGlyphs">CS</text>
<text x="816.20" y="254.60" font-family="'Liberation Sans', sans-serif" font-size="10.4" font-weight="normal" fill="#33337c" text-anchor="middle">RAM 0x0000</text>
<line x1="782.60" y1="392.80" x2="778.00" y2="392.80" stroke="#000" stroke-width="2.6"/>
<polygon points="778.00,392.80 774.00,388.50 760.80,388.50 760.80,397.10 774.00,397.10" fill="#fff" stroke="#000" stroke-width="1.5" stroke-linejoin="miter"/>
<text x="765.10" y="395.10" font-family="'Liberation Mono', sans-serif" font-size="6.8" font-weight="normal" fill="#2a2a2a" text-anchor="start" textLength="7.0" lengthAdjust="spacingAndGlyphs">RW</text>
<line x1="698.60" y1="418.00" x2="703.20" y2="418.00" stroke="#000" stroke-width="2.6"/>
<polygon points="703.20,418.00 707.20,413.70 723.90,413.70 723.90,422.30 707.20,422.30" fill="#fff" stroke="#000" stroke-width="1.5" stroke-linejoin="miter"/>
<text x="708.30" y="420.30" font-family="'Liberation Mono', sans-serif" font-size="6.8" font-weight="normal" fill="#2a2a2a" text-anchor="start" textLength="10.5" lengthAdjust="spacingAndGlyphs">ROM</text>
<line x1="871.20" y1="434.80" x2="875.80" y2="434.80" stroke="#000" stroke-width="2.6"/>
<polygon points="875.80,434.80 879.80,430.50 896.50,430.50 896.50,439.10 879.80,439.10" fill="#fff" stroke="#000" stroke-width="1.5" stroke-linejoin="miter"/>
<text x="880.90" y="437.10" font-family="'Liberation Mono', sans-serif" font-size="6.8" font-weight="normal" fill="#2a2a2a" text-anchor="start" textLength="10.5" lengthAdjust="spacingAndGlyphs">RAM</text>
<polyline points="597,535.6 602,535.6" fill="none" stroke="#c4483a" stroke-width="1.75"/>
<line x1="601.60" y1="535.60" x2="606.20" y2="535.60" stroke="#000" stroke-width="2.6"/>
<polygon points="606.20,535.60 610.20,531.30 626.90,531.30 626.90,539.90 610.20,539.90" fill="#fff" stroke="#000" stroke-width="1.5" stroke-linejoin="miter"/>
<text x="611.30" y="537.90" font-family="'Liberation Mono', sans-serif" font-size="6.8" font-weight="normal" fill="#2a2a2a" text-anchor="start" textLength="10.5" lengthAdjust="spacingAndGlyphs">VIA</text>
<line x1="655.50" y1="426.40" x2="647.90" y2="426.40" stroke="#fa8200" stroke-width="3.1"/>
<polygon points="651.50,426.40 647.90,423.60 647.10,426.40 647.90,429.20" fill="#fa8200"/>
<line x1="655.50" y1="434.80" x2="647.90" y2="434.80" stroke="#fa8200" stroke-width="3.1"/>
<polygon points="651.50,434.80 647.90,432.00 647.10,434.80 647.90,437.60" fill="#fa8200"/>
<path d="M655.50,422.50 L661.00,422.50 C668.00,422.90 673.30,426.70 674.80,430.90 C673.30,435.10 668.00,438.90 661.00,439.30 L655.50,439.30 Z" fill="#fff" stroke="#000" stroke-width="1.5" stroke-linejoin="miter"/>
<line x1="678.40" y1="430.60" x2="681.80" y2="430.60" stroke="#0000c8" stroke-width="2.9"/>
<polygon points="683.60,430.60 679.40,427.90 679.40,433.30" fill="#0000c8"/>
<circle cx="676.40" cy="430.60" r="2.0" fill="#fff" stroke="#0000c8" stroke-width="1.3"/>
<line x1="655.50" y1="485.20" x2="647.90" y2="485.20" stroke="#6464f5" stroke-width="3.1"/>
<polygon points="651.50,485.20 647.90,482.40 647.10,485.20 647.90,488.00" fill="#6464f5"/>
<line x1="655.50" y1="493.60" x2="647.90" y2="493.60" stroke="#6464f5" stroke-width="3.1"/>
<polygon points="651.50,493.60 647.90,490.80 647.10,493.60 647.90,496.40" fill="#6464f5"/>
<path d="M655.50,481.30 L661.00,481.30 C668.00,481.70 673.30,485.50 674.80,489.70 C673.30,493.90 668.00,497.70 661.00,498.10 L655.50,498.10 Z" fill="#fff" stroke="#000" stroke-width="1.5" stroke-linejoin="miter"/>
<line x1="678.40" y1="489.40" x2="681.80" y2="489.40" stroke="#c80000" stroke-width="2.9"/>
<polygon points="683.60,489.40 679.40,486.70 679.40,492.10" fill="#c80000"/>
<circle cx="676.40" cy="489.40" r="2.0" fill="#fff" stroke="#c80000" stroke-width="1.3"/>
<line x1="806.50" y1="430.60" x2="798.90" y2="430.60" stroke="#6464f5" stroke-width="3.1"/>
<polygon points="802.50,430.60 798.90,427.80 798.10,430.60 798.90,433.40" fill="#6464f5"/>
<line x1="806.50" y1="439.00" x2="798.90" y2="439.00" stroke="#fa8200" stroke-width="3.1"/>
<polygon points="802.50,439.00 798.90,436.20 798.10,439.00 798.90,441.80" fill="#fa8200"/>
<path d="M806.50,426.70 L812.00,426.70 C819.00,427.10 824.30,430.90 825.80,435.10 C824.30,439.30 819.00,443.10 812.00,443.50 L806.50,443.50 Z" fill="#fff" stroke="#000" stroke-width="1.5" stroke-linejoin="miter"/>
<line x1="829.40" y1="434.80" x2="832.80" y2="434.80" stroke="#c80000" stroke-width="2.9"/>
<polygon points="834.60,434.80 830.40,432.10 830.40,437.50" fill="#c80000"/>
<circle cx="827.40" cy="434.80" r="2.0" fill="#fff" stroke="#c80000" stroke-width="1.3"/>
<line x1="571.70" y1="531.40" x2="564.10" y2="531.40" stroke="#6464f5" stroke-width="3.1"/>
<polygon points="567.70,531.40 564.10,528.60 563.30,531.40 564.10,534.20" fill="#6464f5"/>
<line x1="571.70" y1="539.80" x2="564.10" y2="539.80" stroke="#6464f5" stroke-width="3.1"/>
<polygon points="567.70,539.80 564.10,537.00 563.30,539.80 564.10,542.60" fill="#6464f5"/>
<path d="M571.70,527.50 L577.20,527.50 C584.20,527.90 589.50,531.70 591.00,535.90 C589.50,540.10 584.20,543.90 577.20,544.30 L571.70,544.30 Z" fill="#fff" stroke="#000" stroke-width="1.5" stroke-linejoin="miter"/>
<line x1="594.60" y1="535.60" x2="598.00" y2="535.60" stroke="#c80000" stroke-width="2.9"/>
<polygon points="599.80,535.60 595.60,532.90 595.60,538.30" fill="#c80000"/>
<circle cx="592.60" cy="535.60" r="2.0" fill="#fff" stroke="#c80000" stroke-width="1.3"/>
<line x1="513.40" y1="539.80" x2="505.00" y2="539.80" stroke="#fa8200" stroke-width="3.1"/>
<polygon points="508.60,539.80 505.00,537.00 504.20,539.80 505.00,542.60" fill="#fa8200"/>
<line x1="535" y1="539.8" x2="539.4" y2="539.8" stroke="#0000c8" stroke-width="2.9"/>
<polygon points="540.4,539.8 536.4,537.20 536.4,542.40" fill="#0000c8"/>
<polygon points="513.6,531.40 530.4,539.8 513.6,548.20" fill="#fff" stroke="#000" stroke-width="1.6" stroke-linejoin="miter"/>
<circle cx="533" cy="539.8" r="2.1" fill="#fff" stroke="#0000c8" stroke-width="1.3"/>
<line x1="301.00" y1="439.00" x2="310.00" y2="439.00" stroke="#c80000" stroke-width="3.1"/>
<polygon points="311.60,439.00 306.80,441.70 306.80,436.30" fill="#c80000"/>
<polygon points="289.4,432.00 301.2,439.0 289.4,446.00" fill="#ffa500" stroke="#000" stroke-width="1.6" stroke-linejoin="miter"/>
<text x="265.20" y="442.00" font-family="'Liberation Sans', sans-serif" font-size="8.2" font-weight="normal" fill="#b8604c" text-anchor="start">5 V</text>
<line x1="320.40" y1="439.00" x2="325.00" y2="439.00" stroke="#000" stroke-width="2.6"/>
<polygon points="325.00,439.00 329.00,434.70 342.20,434.70 342.20,443.30 329.00,443.30" fill="#fff" stroke="#000" stroke-width="1.5" stroke-linejoin="miter"/>
<text x="330.10" y="441.30" font-family="'Liberation Mono', sans-serif" font-size="6.8" font-weight="normal" fill="#2a2a2a" text-anchor="start" textLength="7.0" lengthAdjust="spacingAndGlyphs">5V</text>
<line x1="299.4" y1="461.00" x2="299.4" y2="468.60" stroke="#0000c8" stroke-width="3"/>
<polygon points="299.4,459.20 296.6,463.20 302.2,463.20" fill="#0000c8"/>
<line x1="291.6" y1="468.90" x2="307.4" y2="468.90" stroke="#000" stroke-width="1.9"/>
<line x1="294.2" y1="473.00" x2="304.8" y2="473.00" stroke="#000" stroke-width="1.9"/>
<line x1="296.8" y1="477.20" x2="302.2" y2="477.20" stroke="#000" stroke-width="1.9"/>
<line x1="316.40" y1="460.00" x2="321.00" y2="460.00" stroke="#000" stroke-width="2.6"/>
<polygon points="321.00,460.00 325.00,455.70 341.70,455.70 341.70,464.30 325.00,464.30" fill="#fff" stroke="#000" stroke-width="1.5" stroke-linejoin="miter"/>
<text x="326.10" y="462.30" font-family="'Liberation Mono', sans-serif" font-size="6.8" font-weight="normal" fill="#2a2a2a" text-anchor="start" textLength="10.5" lengthAdjust="spacingAndGlyphs">Gnd</text>
<rect x="895.4" y="286.8" width="171.2" height="114.4" fill="#ffffdc" stroke="#000" stroke-width="1.2"/>
<text x="904.60" y="307.20" font-family="'DejaVu Sans', sans-serif" font-size="10.5" font-weight="normal" fill="#33336e" text-anchor="start" xml:space="preserve">0x0000</text>
<text x="904.60" y="320.90" font-family="'DejaVu Sans', sans-serif" font-size="10.5" font-weight="normal" fill="#33336e" text-anchor="start" xml:space="preserve">    RAM</text>
<text x="904.60" y="334.60" font-family="'DejaVu Sans', sans-serif" font-size="10.5" font-weight="normal" fill="#33336e" text-anchor="start" xml:space="preserve">0x6000 01100000 00000000</text>
<text x="904.60" y="348.30" font-family="'DejaVu Sans', sans-serif" font-size="10.5" font-weight="normal" fill="#33336e" text-anchor="start" xml:space="preserve">    VIA</text>
<text x="904.60" y="362.00" font-family="'DejaVu Sans', sans-serif" font-size="10.5" font-weight="normal" fill="#33336e" text-anchor="start" xml:space="preserve">0x8000 10000000 00000000</text>
<text x="904.60" y="375.70" font-family="'DejaVu Sans', sans-serif" font-size="10.5" font-weight="normal" fill="#33336e" text-anchor="start" xml:space="preserve">    ROM</text>
<text x="904.60" y="389.40" font-family="'DejaVu Sans', sans-serif" font-size="10.5" font-weight="normal" fill="#33336e" text-anchor="start" xml:space="preserve">0xFFFF</text>
<line x1="513.4" y1="73.6" x2="522.2" y2="73.6" stroke="#000" stroke-width="2.6"/>
<line x1="513.4" y1="90.4" x2="522.2" y2="90.4" stroke="#000" stroke-width="2.6"/>
<line x1="513.4" y1="107.2" x2="522.2" y2="107.2" stroke="#000" stroke-width="2.6"/>
<line x1="513.4" y1="124.0" x2="522.2" y2="124.0" stroke="#000" stroke-width="2.6"/>
<line x1="513.4" y1="140.8" x2="522.2" y2="140.8" stroke="#000" stroke-width="2.6"/>
<line x1="513.4" y1="157.6" x2="522.2" y2="157.6" stroke="#000" stroke-width="2.6"/>
<line x1="513.4" y1="174.4" x2="522.2" y2="174.4" stroke="#000" stroke-width="2.6"/>
<line x1="513.4" y1="191.2" x2="522.2" y2="191.2" stroke="#000" stroke-width="2.6"/>
<rect x="522.2" y="64.2" width="403.20" height="160.20" rx="4.5" fill="#f0f0f0" stroke="#000" stroke-width="1.6"/>
<rect x="528.4" y="68.50" width="61.6" height="13.2" rx="2.5" fill="#f0f064" stroke="#b9b9a8" stroke-width="1"/>
<text x="531.20" y="78.70" font-family="'Liberation Sans', sans-serif" font-size="9.3" font-weight="bold" fill="#333" text-anchor="start">p2</text>
<rect x="528.4" y="85.30" width="61.6" height="13.2" rx="2.5" fill="#dcdcff" stroke="#b9b9a8" stroke-width="1"/>
<text x="531.20" y="95.50" font-family="'Liberation Sans', sans-serif" font-size="9.3" font-weight="bold" fill="#333" text-anchor="start">Sync</text>
<rect x="528.4" y="102.10" width="61.6" height="13.2" rx="2.5" fill="#ffd25a" stroke="#b9b9a8" stroke-width="1"/>
<text x="531.20" y="112.30" font-family="'Liberation Sans', sans-serif" font-size="9.3" font-weight="bold" fill="#333" text-anchor="start">RW</text>
<rect x="528.4" y="118.90" width="61.6" height="13.2" rx="2.5" fill="#00f0a0" stroke="#b9b9a8" stroke-width="1"/>
<rect x="528.4" y="135.70" width="61.6" height="13.2" rx="2.5" fill="#f0f064" stroke="#b9b9a8" stroke-width="1"/>
<rect x="528.4" y="152.50" width="61.6" height="13.2" rx="2.5" fill="#dcdcff" stroke="#b9b9a8" stroke-width="1"/>
<text x="531.20" y="162.70" font-family="'Liberation Sans', sans-serif" font-size="9.3" font-weight="bold" fill="#333" text-anchor="start">ROM</text>
<rect x="528.4" y="169.30" width="61.6" height="13.2" rx="2.5" fill="#ffd25a" stroke="#b9b9a8" stroke-width="1"/>
<text x="531.20" y="179.50" font-family="'Liberation Sans', sans-serif" font-size="9.3" font-weight="bold" fill="#333" text-anchor="start">RAM</text>
<rect x="528.4" y="186.10" width="61.6" height="13.2" rx="2.5" fill="#00f0a0" stroke="#b9b9a8" stroke-width="1"/>
<text x="531.20" y="196.30" font-family="'Liberation Sans', sans-serif" font-size="9.3" font-weight="bold" fill="#333" text-anchor="start">VIA</text>
<rect x="528.6" y="204.6" width="61.4" height="15.6" rx="3" fill="url(#btng2)" stroke="#a8a8a8" stroke-width="1"/>
<text x="559.20" y="216.00" font-family="'Liberation Sans', sans-serif" font-size="9.2" font-weight="bold" fill="#222" text-anchor="middle">Expand</text>
<rect x="598" y="69.4" width="322" height="148.6" fill="#000"/>
<rect x="598" y="69.4" width="2.2" height="148.6" fill="#10143c"/>
<rect x="917.4" y="69.4" width="2.6" height="148.6" fill="#10143c"/>
<line x1="600.80" y1="71.9" x2="600.80" y2="216.5" stroke="#787878" stroke-width="1.1"/>
<line x1="632.40" y1="71.9" x2="632.40" y2="216.5" stroke="#787878" stroke-width="1.1"/>
<line x1="664.00" y1="71.9" x2="664.00" y2="216.5" stroke="#787878" stroke-width="1.1"/>
<line x1="695.60" y1="71.9" x2="695.60" y2="216.5" stroke="#787878" stroke-width="1.1"/>
<line x1="727.20" y1="71.9" x2="727.20" y2="216.5" stroke="#787878" stroke-width="1.1"/>
<line x1="758.80" y1="71.9" x2="758.80" y2="216.5" stroke="#787878" stroke-width="1.1"/>
<line x1="790.40" y1="71.9" x2="790.40" y2="216.5" stroke="#787878" stroke-width="1.1"/>
<line x1="822.00" y1="71.9" x2="822.00" y2="216.5" stroke="#787878" stroke-width="1.1"/>
<line x1="853.60" y1="71.9" x2="853.60" y2="216.5" stroke="#787878" stroke-width="1.1"/>
<line x1="885.20" y1="71.9" x2="885.20" y2="216.5" stroke="#787878" stroke-width="1.1"/>
<line x1="916.80" y1="71.9" x2="916.80" y2="216.5" stroke="#787878" stroke-width="1.1"/>
<rect x="661.6" y="74.40" width="255.60" height="14.2" fill="#f0f064"/>
<rect x="661.6" y="92.12" width="255.60" height="14.2" fill="#dcdcff"/>
<rect x="661.6" y="109.84" width="108.40" height="14.2" fill="#ffd25a"/>
<rect x="769.50" y="110.04" width="147.70" height="1.6" fill="#ffd25a"/>
<rect x="661.6" y="127.56" width="255.60" height="14.2" fill="#00f0a0"/>
<rect x="661.6" y="163.00" width="108.40" height="14.2" fill="#dcdcff"/>
<rect x="769.50" y="175.60" width="147.70" height="1.6" fill="#dcdcff"/>
<rect x="661.6" y="180.72" width="108.40" height="14.2" fill="#ffd25a"/>
<line x1="669.20" y1="181.92" x2="669.20" y2="194.92" stroke="#b48c28" stroke-width="0.9"/>
<line x1="675.60" y1="181.92" x2="675.60" y2="194.92" stroke="#b48c28" stroke-width="0.9"/>
<line x1="682.00" y1="181.92" x2="682.00" y2="194.92" stroke="#b48c28" stroke-width="0.9"/>
<line x1="688.40" y1="181.92" x2="688.40" y2="194.92" stroke="#b48c28" stroke-width="0.9"/>
<line x1="694.80" y1="181.92" x2="694.80" y2="194.92" stroke="#b48c28" stroke-width="0.9"/>
<line x1="701.20" y1="181.92" x2="701.20" y2="194.92" stroke="#b48c28" stroke-width="0.9"/>
<line x1="707.60" y1="181.92" x2="707.60" y2="194.92" stroke="#b48c28" stroke-width="0.9"/>
<line x1="714.00" y1="181.92" x2="714.00" y2="194.92" stroke="#b48c28" stroke-width="0.9"/>
<line x1="720.40" y1="181.92" x2="720.40" y2="194.92" stroke="#b48c28" stroke-width="0.9"/>
<line x1="726.80" y1="181.92" x2="726.80" y2="194.92" stroke="#b48c28" stroke-width="0.9"/>
<line x1="733.20" y1="181.92" x2="733.20" y2="194.92" stroke="#b48c28" stroke-width="0.9"/>
<line x1="739.60" y1="181.92" x2="739.60" y2="194.92" stroke="#b48c28" stroke-width="0.9"/>
<line x1="746.00" y1="181.92" x2="746.00" y2="194.92" stroke="#b48c28" stroke-width="0.9"/>
<line x1="752.40" y1="181.92" x2="752.40" y2="194.92" stroke="#b48c28" stroke-width="0.9"/>
<line x1="758.80" y1="181.92" x2="758.80" y2="194.92" stroke="#b48c28" stroke-width="0.9"/>
<line x1="765.20" y1="181.92" x2="765.20" y2="194.92" stroke="#b48c28" stroke-width="0.9"/>
<rect x="769.50" y="181.32" width="147.70" height="1.6" fill="#ffd25a"/>
<rect x="661.6" y="198.44" width="108.40" height="14.2" fill="#00f0a0"/>
<line x1="694.20" y1="199.64" x2="694.20" y2="212.64" stroke="#00c080" stroke-width="0.9"/>
<line x1="700.60" y1="199.64" x2="700.60" y2="212.64" stroke="#00c080" stroke-width="0.9"/>
<line x1="707.00" y1="199.64" x2="707.00" y2="212.64" stroke="#00c080" stroke-width="0.9"/>
<line x1="713.40" y1="199.64" x2="713.40" y2="212.64" stroke="#00c080" stroke-width="0.9"/>
<line x1="719.80" y1="199.64" x2="719.80" y2="212.64" stroke="#00c080" stroke-width="0.9"/>
<line x1="726.20" y1="199.64" x2="726.20" y2="212.64" stroke="#00c080" stroke-width="0.9"/>
<line x1="732.60" y1="199.64" x2="732.60" y2="212.64" stroke="#00c080" stroke-width="0.9"/>
<line x1="739.00" y1="199.64" x2="739.00" y2="212.64" stroke="#00c080" stroke-width="0.9"/>
<line x1="745.40" y1="199.64" x2="745.40" y2="212.64" stroke="#00c080" stroke-width="0.9"/>
<line x1="751.80" y1="199.64" x2="751.80" y2="212.64" stroke="#00c080" stroke-width="0.9"/>
<line x1="758.20" y1="199.64" x2="758.20" y2="212.64" stroke="#00c080" stroke-width="0.9"/>
<line x1="764.60" y1="199.64" x2="764.60" y2="212.64" stroke="#00c080" stroke-width="0.9"/>
<rect x="769.50" y="199.04" width="147.70" height="1.6" fill="#00f0a0"/>
</svg>
</div>
<div id="info">
</div>
<div id="infoin" style="position:absolute;left:0;top:0">
<div class="ir " style="left:209px;top:559.30px">Simulation Time:</div>
<div class="ir rd" style="left:209px;top:570.50px">00:00:04 s</div>
<div class="ir rd" style="left:260px;top:570.50px">200 ms</div>
<div class="ir rd" style="left:297.4px;top:570.50px">000 µs</div>
<div class="ir rd" style="left:332.4px;top:570.50px">000 ns</div>
<div class="ir rd" style="left:367.6px;top:570.50px">001 ps</div>
<div class="ir " style="left:209px;top:587.20px">Target Speed:</div>
<div class="ir bl" style="left:299px;top:587.20px">100.00 %</div>
<div class="ir " style="left:209px;top:598.50px">Real Speed:</div>
<div class="ir bl" style="left:299px;top:598.50px">101.23 %</div>
<div class="ir " style="left:209px;top:615.50px">Engine Load:</div>
<div class="ir bl" style="left:299px;top:615.50px">000.52 %</div>
<div class="ir " style="left:209px;top:626.80px">Update Load:</div>
<div class="ir bl" style="left:299px;top:626.80px">000.85 %</div>
<div class="ir " style="left:209px;top:643.50px">Main MCU:</div>
<div class="ir bl" style="left:299px;top:643.50px">6522-VIA 0x6000</div>
<div class="ir bl" style="left:299px;top:655.40px">6522 at 0 MHz</div>
</div>
<div id="con">
<div class="cr" style="top:0.30px"><span class="cl">FPS:   </span><span class="cv">20</span><span class="cl">         Frames per Sec</span></div>
<div class="cr" style="top:12.08px"><span class="cl">Speed: </span><span class="cv">100 %</span></div>
<div class="cr" style="top:23.86px"><span class="cl">Speed: </span><span class="cv">1000000000000</span><span class="cl">       ps per Sec</span></div>
<div class="cr" style="top:35.64px"><span class="cl">ps</span><span class="cg">/Fr:</span><span class="cl"> </span><span class="cv">50000000000</span><span class="cg">         ps per Frame</span></div>
<div class="cr" style="top:47.42px"><span class="cl">NonLi: </span><span class="cv">100000</span><span class="cl">     Max Iterations</span></div>
<div class="cr" style="top:59.20px"></div>
<div class="cr" style="top:70.98px"><span class="cl">    Simulation Running...</span></div>
</div>
<div style="position:absolute;left:458px;top:673.6px;width:740px;height:1px;background:#d2d2d2"></div>
<div style="position:absolute;left:457.3px;top:559.6px;width:740px;height:1px;background:#f8f8f8"></div>
<div id="sb">
<div style="position:absolute;left:0;top:0;width:9.5px;height:8px;background:#fafafa"></div>
<div style="position:absolute;left:0;top:87.5px;width:9.5px;height:18px;background:#fcfcfc"></div>
<div style="position:absolute;left:0;top:105.5px;width:9.5px;height:7.5px;background:#fafafa;border-top:1px solid #dcdcdc;box-sizing:border-box"></div>
<svg class="ab" style="left:0;top:0" width="10" height="113"><path d="M2.4,5.4 L4.8,2.8 L7.2,5.4 Z M2.4,107.8 L7.2,107.8 L4.8,110.4 Z" fill="#555"/></svg>
</div>
</body></html>
